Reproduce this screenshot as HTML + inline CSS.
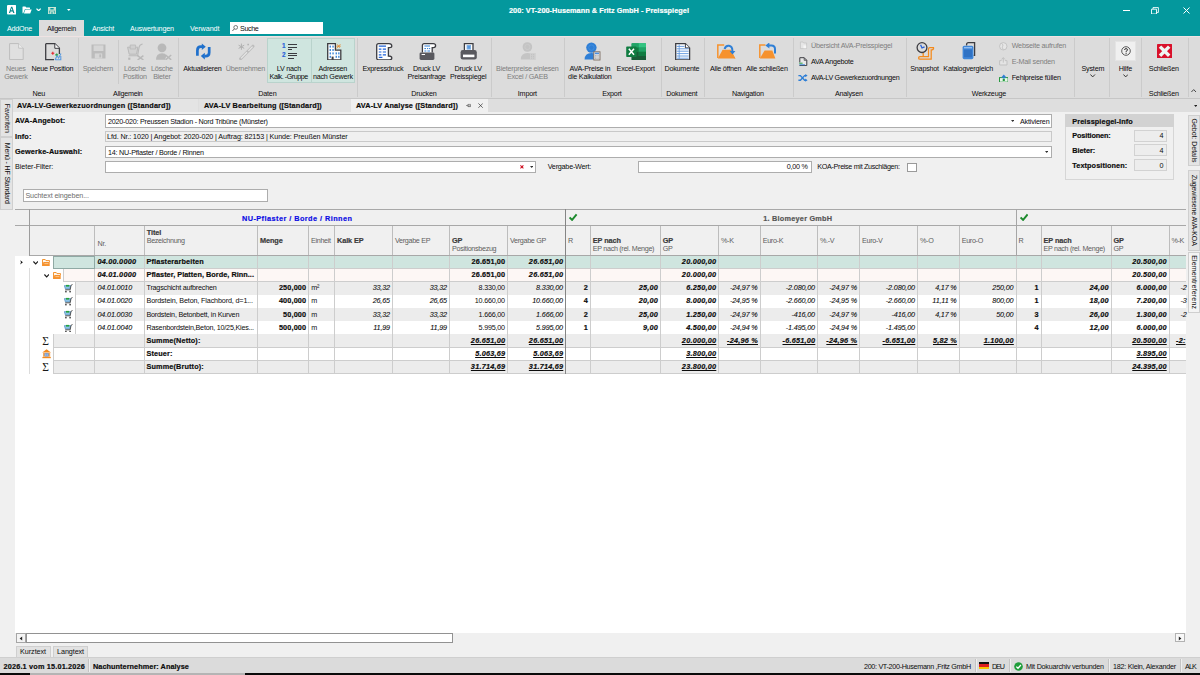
<!DOCTYPE html>
<html><head><meta charset="utf-8"><title>Preisspiegel</title>
<style>
html,body{margin:0;padding:0}
body{width:1200px;height:675px;overflow:hidden;position:relative;background:#f0f0f0;font-family:"Liberation Sans",sans-serif;font-size:7px;color:#0c0c0c}
.t{position:absolute;white-space:nowrap;line-height:10px;height:10px}
.r{position:absolute;box-sizing:border-box;overflow:hidden}
</style></head><body>
<div class="r" style="left:0.00px;top:0.00px;width:1200.00px;height:36.00px;background:#04989d;"></div>
<div class="t" style="top:5.80px;font-size:7.30px;letter-spacing:0.040px;left:509.02px;font-weight:bold;-webkit-text-stroke:0.18px;color:#fff;">200: VT-200-Husemann &amp; Fritz GmbH - Preisspiegel</div>
<div class="r" style="left:39.20px;top:20.00px;width:44.80px;height:17.00px;background:#dcdcdc;"></div>
<div class="t" style="top:23.80px;font-size:7.20px;letter-spacing:-0.237px;left:7.00px;color:#fff;">AddOne</div>
<div class="t" style="top:23.80px;font-size:7.20px;letter-spacing:-0.291px;left:47.05px;color:#0c0c0c;">Allgemein</div>
<div class="t" style="top:23.80px;font-size:7.20px;letter-spacing:-0.230px;left:92.00px;color:#fff;">Ansicht</div>
<div class="t" style="top:23.80px;font-size:7.20px;letter-spacing:-0.169px;left:130.00px;color:#fff;">Auswertungen</div>
<div class="t" style="top:23.80px;font-size:7.20px;letter-spacing:-0.065px;left:190.00px;color:#fff;">Verwandt</div>
<div class="r" style="left:229.70px;top:22.00px;width:93.30px;height:12.20px;background:#fff;"></div>
<div class="t" style="top:23.80px;font-size:7.20px;letter-spacing:-0.383px;left:240.00px;color:#0c0c0c;">Suche</div>
<div class="r" style="left:0.00px;top:36.00px;width:1200.00px;height:62.30px;background:#dcdcdc;"></div>
<div class="r" style="left:0.00px;top:36.00px;width:1200.00px;height:1.00px;background:#efe3e3;"></div>
<div class="r" style="left:0.00px;top:98.00px;width:1200.00px;height:1.00px;background:#c6c6c6;"></div>
<div class="r" style="left:78.00px;top:38.00px;width:1.00px;height:59.00px;background:#cbcbcb;"></div>
<div class="r" style="left:178.00px;top:38.00px;width:1.00px;height:59.00px;background:#cbcbcb;"></div>
<div class="r" style="left:357.00px;top:38.00px;width:1.00px;height:59.00px;background:#cbcbcb;"></div>
<div class="r" style="left:491.30px;top:38.00px;width:1.00px;height:59.00px;background:#cbcbcb;"></div>
<div class="r" style="left:564.00px;top:38.00px;width:1.00px;height:59.00px;background:#cbcbcb;"></div>
<div class="r" style="left:660.60px;top:38.00px;width:1.00px;height:59.00px;background:#cbcbcb;"></div>
<div class="r" style="left:704.30px;top:38.00px;width:1.00px;height:59.00px;background:#cbcbcb;"></div>
<div class="r" style="left:792.50px;top:38.00px;width:1.00px;height:59.00px;background:#cbcbcb;"></div>
<div class="r" style="left:906.00px;top:38.00px;width:1.00px;height:59.00px;background:#cbcbcb;"></div>
<div class="r" style="left:1073.50px;top:38.00px;width:1.00px;height:59.00px;background:#cbcbcb;"></div>
<div class="r" style="left:1109.00px;top:38.00px;width:1.00px;height:59.00px;background:#cbcbcb;"></div>
<div class="r" style="left:1141.00px;top:38.00px;width:1.00px;height:59.00px;background:#cbcbcb;"></div>
<div class="r" style="left:1188.00px;top:38.00px;width:1.00px;height:59.00px;background:#cbcbcb;"></div>
<div class="r" style="left:118.30px;top:40.00px;width:1.00px;height:44.00px;background:#cbcbcb;"></div>
<div class="r" style="left:267.00px;top:38.40px;width:44.50px;height:44.20px;background:#cfe5df;box-shadow:inset 0 0 0 1px #b9d3cc;"></div>
<div class="r" style="left:311.00px;top:38.40px;width:43.70px;height:44.20px;background:#cfe5df;box-shadow:inset 0 0 0 1px #b9d3cc;"></div>
<div class="t" style="top:63.90px;font-size:7.20px;letter-spacing:-0.220px;left:6.03px;color:#7e7e7e;">Neues</div>
<div class="t" style="top:72.00px;font-size:7.20px;letter-spacing:-0.220px;left:4.15px;color:#7e7e7e;">Gewerk</div>
<div class="t" style="top:63.90px;font-size:7.20px;letter-spacing:-0.220px;left:31.41px;color:#0c0c0c;">Neue Position</div>
<div class="t" style="top:63.90px;font-size:7.20px;letter-spacing:-0.220px;left:82.67px;color:#7e7e7e;">Speichern</div>
<div class="t" style="top:63.90px;font-size:7.20px;letter-spacing:-0.220px;left:123.94px;color:#7e7e7e;">Lösche</div>
<div class="t" style="top:72.00px;font-size:7.20px;letter-spacing:-0.220px;left:122.96px;color:#7e7e7e;">Position</div>
<div class="t" style="top:63.90px;font-size:7.20px;letter-spacing:-0.220px;left:150.94px;color:#7e7e7e;">Lösche</div>
<div class="t" style="top:72.00px;font-size:7.20px;letter-spacing:-0.220px;left:153.15px;color:#7e7e7e;">Bieter</div>
<div class="t" style="top:63.90px;font-size:7.20px;letter-spacing:-0.220px;left:183.21px;color:#0c0c0c;">Aktualisieren</div>
<div class="t" style="top:63.90px;font-size:7.20px;letter-spacing:-0.220px;left:225.68px;color:#7e7e7e;">Übernehmen</div>
<div class="t" style="top:63.90px;font-size:7.20px;letter-spacing:-0.220px;left:276.72px;color:#0c0c0c;">LV nach</div>
<div class="t" style="top:72.00px;font-size:7.20px;letter-spacing:-0.471px;left:269.61px;color:#0c0c0c;">Kalk. -Gruppe</div>
<div class="t" style="top:63.90px;font-size:7.20px;letter-spacing:-0.220px;left:318.56px;color:#0c0c0c;">Adressen</div>
<div class="t" style="top:72.00px;font-size:7.20px;letter-spacing:-0.220px;left:312.89px;color:#0c0c0c;">nach Gewerk</div>
<div class="t" style="top:63.90px;font-size:7.20px;letter-spacing:-0.220px;left:362.40px;color:#0c0c0c;">Expressdruck</div>
<div class="t" style="top:63.90px;font-size:7.20px;letter-spacing:-0.220px;left:412.93px;color:#0c0c0c;">Druck LV</div>
<div class="t" style="top:72.00px;font-size:7.20px;letter-spacing:-0.220px;left:407.50px;color:#0c0c0c;">Preisanfrage</div>
<div class="t" style="top:63.90px;font-size:7.20px;letter-spacing:-0.220px;left:454.53px;color:#0c0c0c;">Druck LV</div>
<div class="t" style="top:72.00px;font-size:7.20px;letter-spacing:-0.220px;left:449.90px;color:#0c0c0c;">Preisspiegel</div>
<div class="t" style="top:63.90px;font-size:7.20px;letter-spacing:-0.220px;left:496.08px;color:#7e7e7e;">Bieterpreise einlesen</div>
<div class="t" style="top:72.00px;font-size:7.20px;letter-spacing:-0.220px;left:506.90px;color:#7e7e7e;">Excel / GAEB</div>
<div class="t" style="top:63.90px;font-size:7.20px;letter-spacing:-0.220px;left:569.44px;color:#0c0c0c;">AVA-Preise in</div>
<div class="t" style="top:72.00px;font-size:7.20px;letter-spacing:-0.220px;left:568.12px;color:#0c0c0c;">die Kalkulation</div>
<div class="t" style="top:63.90px;font-size:7.20px;letter-spacing:-0.220px;left:616.60px;color:#0c0c0c;">Excel-Export</div>
<div class="t" style="top:63.90px;font-size:7.20px;letter-spacing:-0.220px;left:664.47px;color:#0c0c0c;">Dokumente</div>
<div class="t" style="top:63.90px;font-size:7.20px;letter-spacing:-0.220px;left:709.95px;color:#0c0c0c;">Alle öffnen</div>
<div class="t" style="top:63.90px;font-size:7.20px;letter-spacing:-0.220px;left:746.02px;color:#0c0c0c;">Alle schließen</div>
<div class="t" style="top:63.90px;font-size:7.20px;letter-spacing:-0.220px;left:910.26px;color:#0c0c0c;">Snapshot</div>
<div class="t" style="top:63.90px;font-size:7.20px;letter-spacing:-0.220px;left:943.33px;color:#0c0c0c;">Katalogvergleich</div>
<div class="t" style="top:63.90px;font-size:7.20px;letter-spacing:-0.220px;left:1081.55px;color:#0c0c0c;">System</div>
<div class="t" style="top:63.90px;font-size:7.20px;letter-spacing:-0.220px;left:1118.74px;color:#0c0c0c;">Hilfe</div>
<div class="t" style="top:63.90px;font-size:7.20px;letter-spacing:-0.220px;left:1148.87px;color:#0c0c0c;">Schließen</div>
<div class="t" style="top:40.80px;font-size:7.20px;letter-spacing:-0.220px;left:811.00px;color:#7e7e7e;">Übersicht AVA-Preisspiegel</div>
<div class="t" style="top:56.80px;font-size:7.20px;letter-spacing:-0.220px;left:811.00px;">AVA Angebote</div>
<div class="t" style="top:73.30px;font-size:7.20px;letter-spacing:-0.334px;left:811.00px;">AVA-LV Gewerkezuordnungen</div>
<div class="t" style="top:40.80px;font-size:7.20px;letter-spacing:-0.220px;left:1011.70px;color:#7e7e7e;">Webseite aufrufen</div>
<div class="t" style="top:56.80px;font-size:7.20px;letter-spacing:-0.220px;left:1011.70px;color:#7e7e7e;">E-Mail senden</div>
<div class="t" style="top:73.30px;font-size:7.20px;letter-spacing:-0.220px;left:1011.70px;">Fehlpreise füllen</div>
<div class="t" style="top:89.00px;font-size:7.20px;letter-spacing:-0.220px;left:32.62px;">Neu</div>
<div class="t" style="top:89.00px;font-size:7.20px;letter-spacing:-0.220px;left:113.07px;">Allgemein</div>
<div class="t" style="top:89.00px;font-size:7.20px;letter-spacing:-0.220px;left:258.33px;">Daten</div>
<div class="t" style="top:89.00px;font-size:7.20px;letter-spacing:-0.220px;left:411.25px;">Drucken</div>
<div class="t" style="top:89.00px;font-size:7.20px;letter-spacing:-0.220px;left:517.85px;">Import</div>
<div class="t" style="top:89.00px;font-size:7.20px;letter-spacing:-0.220px;left:602.15px;">Export</div>
<div class="t" style="top:89.00px;font-size:7.20px;letter-spacing:-0.220px;left:666.36px;">Dokument</div>
<div class="t" style="top:89.00px;font-size:7.20px;letter-spacing:-0.220px;left:731.98px;">Navigation</div>
<div class="t" style="top:89.00px;font-size:7.20px;letter-spacing:-0.220px;left:834.96px;">Analysen</div>
<div class="t" style="top:89.00px;font-size:7.20px;letter-spacing:-0.220px;left:971.74px;">Werkzeuge</div>
<div class="t" style="top:89.00px;font-size:7.20px;letter-spacing:-0.220px;left:1148.87px;">Schließen</div>
<div class="r" style="left:0.00px;top:99.00px;width:1200.00px;height:13.20px;background:#dedede;"></div>
<div class="r" style="left:13.00px;top:99.00px;width:185.00px;height:13.20px;background:#e4e4e4;"></div>
<div class="r" style="left:198.50px;top:99.00px;width:152.50px;height:13.20px;background:#e2e2e2;"></div>
<div class="r" style="left:351.00px;top:99.00px;width:136.50px;height:14.00px;background:#f0f0f0;"></div>
<div class="t" style="top:100.90px;font-size:7.30px;letter-spacing:0.168px;left:17.00px;font-weight:bold;-webkit-text-stroke:0.18px;">AVA-LV-Gewerkezuordnungen ([Standard])</div>
<div class="t" style="top:100.90px;font-size:7.30px;letter-spacing:0.143px;left:204.00px;font-weight:bold;-webkit-text-stroke:0.18px;">AVA-LV Bearbeitung ([Standard])</div>
<div class="t" style="top:100.90px;font-size:7.30px;letter-spacing:0.122px;left:356.00px;font-weight:bold;-webkit-text-stroke:0.18px;">AVA-LV Analyse ([Standard])</div>
<div class="r" style="left:0.00px;top:99.00px;width:12.50px;height:576.00px;background:#f0f0f0;"></div>
<div class="r" style="left:1186.00px;top:112.50px;width:14.00px;height:545.00px;background:#f0f0f0;"></div>
<div class="t" style="top:116.30px;font-size:7.30px;letter-spacing:0.130px;left:15.00px;font-weight:bold;-webkit-text-stroke:0.18px;">AVA-Angebot:</div>
<div class="r" style="left:105.00px;top:114.30px;width:946.50px;height:13.40px;background:#fff;box-shadow:inset 0 0 0 1px #adadad;"></div>
<div class="t" style="top:116.70px;font-size:7.20px;letter-spacing:-0.237px;left:108.00px;">2020-020: Preussen Stadion - Nord Tribüne (Münster)</div>
<div class="t" style="top:116.70px;font-size:7.20px;letter-spacing:-0.211px;left:1020.00px;">Aktivieren</div>
<div class="t" style="top:132.20px;font-size:7.30px;letter-spacing:0.130px;left:15.00px;font-weight:bold;-webkit-text-stroke:0.18px;">Info:</div>
<div class="r" style="left:105.00px;top:131.00px;width:946.50px;height:11.40px;background:#f0f0f0;box-shadow:inset 0 0 0 1px #c9c9c9;"></div>
<div class="t" style="top:132.00px;font-size:7.20px;letter-spacing:-0.105px;left:107.00px;">Lfd. Nr.: 1020 | Angebot: 2020-020 | Auftrag: 82153 | Kunde: Preußen Münster</div>
<div class="t" style="top:147.20px;font-size:7.30px;letter-spacing:0.130px;left:15.00px;font-weight:bold;-webkit-text-stroke:0.18px;">Gewerke-Auswahl:</div>
<div class="r" style="left:105.00px;top:145.60px;width:946.50px;height:12.30px;background:#fff;box-shadow:inset 0 0 0 1px #adadad;"></div>
<div class="t" style="top:147.50px;font-size:7.20px;letter-spacing:-0.227px;left:108.00px;">14: NU-Pflaster / Borde / Rinnen</div>
<div class="t" style="top:162.20px;font-size:7.20px;letter-spacing:-0.065px;left:15.00px;">Bieter-Filter:</div>
<div class="r" style="left:105.00px;top:160.60px;width:431.00px;height:12.30px;background:#fff;box-shadow:inset 0 0 0 1px #adadad;"></div>
<div class="t" style="top:162.20px;font-size:7.20px;letter-spacing:-0.220px;left:547.70px;">Vergabe-Wert:</div>
<div class="r" style="left:638.30px;top:160.60px;width:173.40px;height:12.30px;background:#fff;box-shadow:inset 0 0 0 1px #adadad;"></div>
<div class="t" style="top:162.40px;font-size:7.20px;letter-spacing:-0.220px;left:786.68px;">0,00 %</div>
<div class="t" style="top:162.20px;font-size:7.20px;letter-spacing:-0.321px;left:817.30px;">KOA-Preise mit Zuschlägen:</div>
<div class="r" style="left:907.30px;top:162.50px;width:9.50px;height:9.50px;background:#fff;box-shadow:inset 0 0 0 1px #9a9a9a;"></div>
<div class="r" style="left:23.30px;top:189.30px;width:244.50px;height:12.50px;background:#fff;box-shadow:inset 0 0 0 1px #adadad;"></div>
<div class="t" style="top:191.00px;font-size:7.20px;letter-spacing:-0.102px;left:25.40px;color:#6c6c6c;">Suchtext eingeben...</div>
<div class="r" style="left:1065.00px;top:114.30px;width:109.00px;height:65.50px;background:#f0f0f0;box-shadow:inset 0 0 0 1px #d6d6d6;"></div>
<div class="r" style="left:1065.00px;top:114.30px;width:109.00px;height:13.20px;background:#d2d2d2;"></div>
<div class="t" style="top:116.80px;font-size:7.30px;letter-spacing:0.099px;left:1072.30px;font-weight:bold;-webkit-text-stroke:0.18px;">Preisspiegel-Info</div>
<div class="t" style="top:130.80px;font-size:7.30px;letter-spacing:-0.131px;left:1072.30px;font-weight:bold;-webkit-text-stroke:0.18px;">Positionen:</div>
<div class="r" style="left:1134.30px;top:129.60px;width:32.50px;height:12.00px;background:#ededed;box-shadow:inset 0 0 0 1px #d2d2d2;"></div>
<div class="t" style="top:131.00px;font-size:7.20px;letter-spacing:-0.220px;left:1159.50px;">4</div>
<div class="t" style="top:145.60px;font-size:7.30px;letter-spacing:-0.018px;left:1072.30px;font-weight:bold;-webkit-text-stroke:0.18px;">Bieter:</div>
<div class="r" style="left:1134.30px;top:144.30px;width:32.50px;height:12.00px;background:#ededed;box-shadow:inset 0 0 0 1px #d2d2d2;"></div>
<div class="t" style="top:145.80px;font-size:7.20px;letter-spacing:-0.220px;left:1159.50px;">4</div>
<div class="t" style="top:160.60px;font-size:7.30px;letter-spacing:0.080px;left:1072.30px;font-weight:bold;-webkit-text-stroke:0.18px;">Textpositionen:</div>
<div class="r" style="left:1134.30px;top:159.30px;width:32.50px;height:12.00px;background:#ededed;box-shadow:inset 0 0 0 1px #d2d2d2;"></div>
<div class="t" style="top:160.80px;font-size:7.20px;letter-spacing:-0.220px;left:1159.50px;">0</div>
<div class="r" style="left:15.00px;top:209.00px;width:1171.00px;height:423.50px;background:#fff;"></div>
<div class="r" style="left:15.00px;top:209.00px;width:1171.00px;height:16.00px;background:#f0f0f0;"></div>
<div class="r" style="left:15.00px;top:209.00px;width:1171.00px;height:1.00px;background:#a8a8a8;"></div>
<div class="r" style="left:15.00px;top:225.00px;width:1171.00px;height:1.00px;background:#a8a8a8;"></div>
<div class="r" style="left:15.00px;top:226.00px;width:1171.00px;height:29.50px;background:#f0f0f0;"></div>
<div class="r" style="left:29.00px;top:255.00px;width:1157.00px;height:1.00px;background:#a8a8a8;"></div>
<div class="r" style="left:29.00px;top:226.00px;width:1.00px;height:29.00px;background:#bdbdbd;"></div>
<div class="r" style="left:94.30px;top:226.00px;width:1.00px;height:29.00px;background:#bdbdbd;"></div>
<div class="r" style="left:144.00px;top:226.00px;width:1.00px;height:29.00px;background:#bdbdbd;"></div>
<div class="r" style="left:257.30px;top:226.00px;width:1.00px;height:29.00px;background:#bdbdbd;"></div>
<div class="r" style="left:308.30px;top:226.00px;width:1.00px;height:29.00px;background:#bdbdbd;"></div>
<div class="r" style="left:334.30px;top:226.00px;width:1.00px;height:29.00px;background:#bdbdbd;"></div>
<div class="r" style="left:392.30px;top:226.00px;width:1.00px;height:29.00px;background:#bdbdbd;"></div>
<div class="r" style="left:449.30px;top:226.00px;width:1.00px;height:29.00px;background:#bdbdbd;"></div>
<div class="r" style="left:507.30px;top:226.00px;width:1.00px;height:29.00px;background:#bdbdbd;"></div>
<div class="r" style="left:565.30px;top:226.00px;width:1.00px;height:29.00px;background:#bdbdbd;"></div>
<div class="r" style="left:590.10px;top:226.00px;width:1.00px;height:29.00px;background:#bdbdbd;"></div>
<div class="r" style="left:660.00px;top:226.00px;width:1.00px;height:29.00px;background:#bdbdbd;"></div>
<div class="r" style="left:718.30px;top:226.00px;width:1.00px;height:29.00px;background:#bdbdbd;"></div>
<div class="r" style="left:760.00px;top:226.00px;width:1.00px;height:29.00px;background:#bdbdbd;"></div>
<div class="r" style="left:817.30px;top:226.00px;width:1.00px;height:29.00px;background:#bdbdbd;"></div>
<div class="r" style="left:859.30px;top:226.00px;width:1.00px;height:29.00px;background:#bdbdbd;"></div>
<div class="r" style="left:917.30px;top:226.00px;width:1.00px;height:29.00px;background:#bdbdbd;"></div>
<div class="r" style="left:959.00px;top:226.00px;width:1.00px;height:29.00px;background:#bdbdbd;"></div>
<div class="r" style="left:1015.80px;top:226.00px;width:1.00px;height:29.00px;background:#bdbdbd;"></div>
<div class="r" style="left:1040.80px;top:226.00px;width:1.00px;height:29.00px;background:#bdbdbd;"></div>
<div class="r" style="left:1110.80px;top:226.00px;width:1.00px;height:29.00px;background:#bdbdbd;"></div>
<div class="r" style="left:1168.70px;top:226.00px;width:1.00px;height:29.00px;background:#bdbdbd;"></div>
<div class="r" style="left:29.00px;top:209.00px;width:1.00px;height:46.50px;background:#9c9c9c;"></div>
<div class="r" style="left:565.30px;top:209.00px;width:1.00px;height:46.50px;background:#858585;"></div>
<div class="r" style="left:1015.80px;top:209.00px;width:1.00px;height:46.50px;background:#a6a6a6;"></div>
<div class="t" style="top:213.60px;font-size:7.30px;letter-spacing:0.455px;left:241.98px;font-weight:bold;-webkit-text-stroke:0.18px;color:#0c0ce4;">NU-Pflaster / Borde / Rinnen</div>
<div class="t" style="top:213.60px;font-size:7.30px;letter-spacing:0.230px;left:763.30px;font-weight:bold;-webkit-text-stroke:0.18px;color:#555;">1. Blomeyer GmbH</div>
<svg class="r" style="left:569.00px;top:212.80px" width="8.5" height="8.5" viewBox="0 0 8.5 8.5"><path d="M0.6 4.4 L3.1 6.9 L7.6 1.4" fill="none" stroke="#1c8a2c" stroke-width="1.9"/></svg>
<svg class="r" style="left:1019.80px;top:212.80px" width="8.5" height="8.5" viewBox="0 0 8.5 8.5"><path d="M0.6 4.4 L3.1 6.9 L7.6 1.4" fill="none" stroke="#1c8a2c" stroke-width="1.9"/></svg>
<div class="t" style="top:239.30px;font-size:7.20px;letter-spacing:-0.220px;left:97.50px;color:#5e5e5e;">Nr.</div>
<div class="t" style="top:227.90px;font-size:7.30px;letter-spacing:-0.080px;left:146.70px;font-weight:bold;-webkit-text-stroke:0.18px;color:#3a3a3a;">Titel</div>
<div class="t" style="top:236.00px;font-size:7.20px;letter-spacing:-0.320px;left:146.70px;color:#5e5e5e;">Bezeichnung</div>
<div class="t" style="top:235.70px;font-size:7.30px;letter-spacing:-0.080px;left:260.00px;font-weight:bold;-webkit-text-stroke:0.18px;color:#3a3a3a;">Menge</div>
<div class="t" style="top:235.70px;font-size:7.20px;letter-spacing:-0.320px;left:311.00px;color:#5e5e5e;">Einheit</div>
<div class="t" style="top:235.70px;font-size:7.30px;letter-spacing:-0.080px;left:337.00px;font-weight:bold;-webkit-text-stroke:0.18px;color:#3a3a3a;">Kalk EP</div>
<div class="t" style="top:235.70px;font-size:7.20px;letter-spacing:-0.320px;left:395.00px;color:#5e5e5e;">Vergabe EP</div>
<div class="t" style="top:235.70px;font-size:7.30px;letter-spacing:-0.080px;left:452.00px;font-weight:bold;-webkit-text-stroke:0.18px;color:#3a3a3a;">GP</div>
<div class="t" style="top:244.00px;font-size:7.20px;letter-spacing:-0.320px;left:452.00px;color:#5e5e5e;">Positionsbezug</div>
<div class="t" style="top:235.70px;font-size:7.20px;letter-spacing:-0.320px;left:510.00px;color:#5e5e5e;">Vergabe GP</div>
<div class="t" style="top:235.70px;font-size:7.20px;letter-spacing:-0.320px;left:568.00px;color:#5e5e5e;">R</div>
<div class="t" style="top:235.70px;font-size:7.30px;letter-spacing:-0.080px;left:592.80px;font-weight:bold;-webkit-text-stroke:0.18px;color:#3a3a3a;">EP nach</div>
<div class="t" style="top:244.00px;font-size:7.20px;letter-spacing:-0.320px;left:592.80px;color:#5e5e5e;">EP nach (rel. Menge)</div>
<div class="t" style="top:235.70px;font-size:7.30px;letter-spacing:-0.080px;left:662.70px;font-weight:bold;-webkit-text-stroke:0.18px;color:#3a3a3a;">GP</div>
<div class="t" style="top:244.00px;font-size:7.20px;letter-spacing:-0.320px;left:662.70px;color:#5e5e5e;">GP</div>
<div class="t" style="top:235.70px;font-size:7.20px;letter-spacing:-0.320px;left:721.00px;color:#5e5e5e;">%-K</div>
<div class="t" style="top:235.70px;font-size:7.20px;letter-spacing:-0.320px;left:762.70px;color:#5e5e5e;">Euro-K</div>
<div class="t" style="top:235.70px;font-size:7.20px;letter-spacing:-0.320px;left:820.00px;color:#5e5e5e;">%.-V</div>
<div class="t" style="top:235.70px;font-size:7.20px;letter-spacing:-0.320px;left:862.00px;color:#5e5e5e;">Euro-V</div>
<div class="t" style="top:235.70px;font-size:7.20px;letter-spacing:-0.320px;left:920.00px;color:#5e5e5e;">%-O</div>
<div class="t" style="top:235.70px;font-size:7.20px;letter-spacing:-0.320px;left:961.70px;color:#5e5e5e;">Euro-O</div>
<div class="t" style="top:235.70px;font-size:7.20px;letter-spacing:-0.320px;left:1018.50px;color:#5e5e5e;">R</div>
<div class="t" style="top:235.70px;font-size:7.30px;letter-spacing:-0.080px;left:1043.50px;font-weight:bold;-webkit-text-stroke:0.18px;color:#3a3a3a;">EP nach</div>
<div class="t" style="top:244.00px;font-size:7.20px;letter-spacing:-0.320px;left:1043.50px;color:#5e5e5e;">EP nach (rel. Menge)</div>
<div class="t" style="top:235.70px;font-size:7.30px;letter-spacing:-0.080px;left:1113.50px;font-weight:bold;-webkit-text-stroke:0.18px;color:#3a3a3a;">GP</div>
<div class="t" style="top:244.00px;font-size:7.20px;letter-spacing:-0.320px;left:1113.50px;color:#5e5e5e;">GP</div>
<div class="t" style="top:235.70px;font-size:7.20px;letter-spacing:-0.320px;left:1171.40px;color:#5e5e5e;">%-K</div>
<div class="r" style="left:53.00px;top:255.90px;width:1133.00px;height:13.09px;background:#cfe5df;"></div>
<div class="r" style="left:53.00px;top:268.39px;width:1133.00px;height:1.00px;background:#cdcdcd;"></div>
<div class="r" style="left:53.00px;top:255.90px;width:1.00px;height:13.09px;background:#cdcdcd;"></div>
<div class="r" style="left:94.30px;top:255.90px;width:1.00px;height:13.09px;background:#cdcdcd;"></div>
<div class="r" style="left:144.00px;top:255.90px;width:1.00px;height:13.09px;background:#cdcdcd;"></div>
<div class="r" style="left:257.30px;top:255.90px;width:1.00px;height:13.09px;background:#cdcdcd;"></div>
<div class="r" style="left:308.30px;top:255.90px;width:1.00px;height:13.09px;background:#cdcdcd;"></div>
<div class="r" style="left:334.30px;top:255.90px;width:1.00px;height:13.09px;background:#cdcdcd;"></div>
<div class="r" style="left:392.30px;top:255.90px;width:1.00px;height:13.09px;background:#cdcdcd;"></div>
<div class="r" style="left:449.30px;top:255.90px;width:1.00px;height:13.09px;background:#cdcdcd;"></div>
<div class="r" style="left:507.30px;top:255.90px;width:1.00px;height:13.09px;background:#cdcdcd;"></div>
<div class="r" style="left:565.30px;top:255.90px;width:1.00px;height:13.09px;background:#cdcdcd;"></div>
<div class="r" style="left:590.10px;top:255.90px;width:1.00px;height:13.09px;background:#cdcdcd;"></div>
<div class="r" style="left:660.00px;top:255.90px;width:1.00px;height:13.09px;background:#cdcdcd;"></div>
<div class="r" style="left:718.30px;top:255.90px;width:1.00px;height:13.09px;background:#cdcdcd;"></div>
<div class="r" style="left:760.00px;top:255.90px;width:1.00px;height:13.09px;background:#cdcdcd;"></div>
<div class="r" style="left:817.30px;top:255.90px;width:1.00px;height:13.09px;background:#cdcdcd;"></div>
<div class="r" style="left:859.30px;top:255.90px;width:1.00px;height:13.09px;background:#cdcdcd;"></div>
<div class="r" style="left:917.30px;top:255.90px;width:1.00px;height:13.09px;background:#cdcdcd;"></div>
<div class="r" style="left:959.00px;top:255.90px;width:1.00px;height:13.09px;background:#cdcdcd;"></div>
<div class="r" style="left:1015.80px;top:255.90px;width:1.00px;height:13.09px;background:#cdcdcd;"></div>
<div class="r" style="left:1040.80px;top:255.90px;width:1.00px;height:13.09px;background:#cdcdcd;"></div>
<div class="r" style="left:1110.80px;top:255.90px;width:1.00px;height:13.09px;background:#cdcdcd;"></div>
<div class="r" style="left:1168.70px;top:255.90px;width:1.00px;height:13.09px;background:#cdcdcd;"></div>
<div class="t" style="top:257.14px;font-size:7.30px;letter-spacing:0.220px;left:97.50px;font-weight:bold;-webkit-text-stroke:0.18px;font-style:italic;">04.00.0000</div>
<div class="t" style="top:257.14px;font-size:7.30px;letter-spacing:0.130px;left:146.50px;font-weight:bold;-webkit-text-stroke:0.18px;">Pflasterarbeiten</div>
<div class="t" style="top:257.14px;font-size:7.30px;letter-spacing:0.130px;left:471.58px;font-weight:bold;-webkit-text-stroke:0.18px;">26.651,00</div>
<div class="t" style="top:257.14px;font-size:7.30px;letter-spacing:0.220px;left:528.86px;font-weight:bold;-webkit-text-stroke:0.18px;font-style:italic;">26.651,00</div>
<div class="t" style="top:257.14px;font-size:7.30px;letter-spacing:0.220px;left:681.86px;font-weight:bold;-webkit-text-stroke:0.18px;font-style:italic;">20.000,00</div>
<div class="t" style="top:257.14px;font-size:7.30px;letter-spacing:0.220px;left:1132.26px;font-weight:bold;-webkit-text-stroke:0.18px;font-style:italic;">20.500,00</div>
<div class="r" style="left:63.40px;top:268.99px;width:1122.60px;height:13.09px;background:#fdf7f5;"></div>
<div class="r" style="left:63.40px;top:281.48px;width:1122.60px;height:1.00px;background:#cdcdcd;"></div>
<div class="r" style="left:63.40px;top:268.99px;width:1.00px;height:13.09px;background:#cdcdcd;"></div>
<div class="r" style="left:94.30px;top:268.99px;width:1.00px;height:13.09px;background:#cdcdcd;"></div>
<div class="r" style="left:144.00px;top:268.99px;width:1.00px;height:13.09px;background:#cdcdcd;"></div>
<div class="r" style="left:257.30px;top:268.99px;width:1.00px;height:13.09px;background:#cdcdcd;"></div>
<div class="r" style="left:308.30px;top:268.99px;width:1.00px;height:13.09px;background:#cdcdcd;"></div>
<div class="r" style="left:334.30px;top:268.99px;width:1.00px;height:13.09px;background:#cdcdcd;"></div>
<div class="r" style="left:392.30px;top:268.99px;width:1.00px;height:13.09px;background:#cdcdcd;"></div>
<div class="r" style="left:449.30px;top:268.99px;width:1.00px;height:13.09px;background:#cdcdcd;"></div>
<div class="r" style="left:507.30px;top:268.99px;width:1.00px;height:13.09px;background:#cdcdcd;"></div>
<div class="r" style="left:565.30px;top:268.99px;width:1.00px;height:13.09px;background:#cdcdcd;"></div>
<div class="r" style="left:590.10px;top:268.99px;width:1.00px;height:13.09px;background:#cdcdcd;"></div>
<div class="r" style="left:660.00px;top:268.99px;width:1.00px;height:13.09px;background:#cdcdcd;"></div>
<div class="r" style="left:718.30px;top:268.99px;width:1.00px;height:13.09px;background:#cdcdcd;"></div>
<div class="r" style="left:760.00px;top:268.99px;width:1.00px;height:13.09px;background:#cdcdcd;"></div>
<div class="r" style="left:817.30px;top:268.99px;width:1.00px;height:13.09px;background:#cdcdcd;"></div>
<div class="r" style="left:859.30px;top:268.99px;width:1.00px;height:13.09px;background:#cdcdcd;"></div>
<div class="r" style="left:917.30px;top:268.99px;width:1.00px;height:13.09px;background:#cdcdcd;"></div>
<div class="r" style="left:959.00px;top:268.99px;width:1.00px;height:13.09px;background:#cdcdcd;"></div>
<div class="r" style="left:1015.80px;top:268.99px;width:1.00px;height:13.09px;background:#cdcdcd;"></div>
<div class="r" style="left:1040.80px;top:268.99px;width:1.00px;height:13.09px;background:#cdcdcd;"></div>
<div class="r" style="left:1110.80px;top:268.99px;width:1.00px;height:13.09px;background:#cdcdcd;"></div>
<div class="r" style="left:1168.70px;top:268.99px;width:1.00px;height:13.09px;background:#cdcdcd;"></div>
<div class="t" style="top:270.24px;font-size:7.30px;letter-spacing:0.220px;left:97.50px;font-weight:bold;-webkit-text-stroke:0.18px;font-style:italic;">04.01.0000</div>
<div class="t" style="top:270.24px;font-size:7.30px;letter-spacing:0.037px;left:146.50px;font-weight:bold;-webkit-text-stroke:0.18px;">Pflaster, Platten, Borde, Rinn...</div>
<div class="t" style="top:270.24px;font-size:7.30px;letter-spacing:0.130px;left:471.58px;font-weight:bold;-webkit-text-stroke:0.18px;">26.651,00</div>
<div class="t" style="top:270.24px;font-size:7.30px;letter-spacing:0.220px;left:528.86px;font-weight:bold;-webkit-text-stroke:0.18px;font-style:italic;">26.651,00</div>
<div class="t" style="top:270.24px;font-size:7.30px;letter-spacing:0.220px;left:681.86px;font-weight:bold;-webkit-text-stroke:0.18px;font-style:italic;">20.000,00</div>
<div class="t" style="top:270.24px;font-size:7.30px;letter-spacing:0.220px;left:1132.26px;font-weight:bold;-webkit-text-stroke:0.18px;font-style:italic;">20.500,00</div>
<div class="r" style="left:74.50px;top:282.08px;width:1111.50px;height:13.09px;background:#ececec;"></div>
<div class="r" style="left:74.50px;top:294.57px;width:1111.50px;height:1.00px;background:#cdcdcd;"></div>
<div class="r" style="left:74.50px;top:282.08px;width:1.00px;height:13.09px;background:#cdcdcd;"></div>
<div class="r" style="left:94.30px;top:282.08px;width:1.00px;height:13.09px;background:#cdcdcd;"></div>
<div class="r" style="left:144.00px;top:282.08px;width:1.00px;height:13.09px;background:#cdcdcd;"></div>
<div class="r" style="left:257.30px;top:282.08px;width:1.00px;height:13.09px;background:#cdcdcd;"></div>
<div class="r" style="left:308.30px;top:282.08px;width:1.00px;height:13.09px;background:#cdcdcd;"></div>
<div class="r" style="left:334.30px;top:282.08px;width:1.00px;height:13.09px;background:#cdcdcd;"></div>
<div class="r" style="left:392.30px;top:282.08px;width:1.00px;height:13.09px;background:#cdcdcd;"></div>
<div class="r" style="left:449.30px;top:282.08px;width:1.00px;height:13.09px;background:#cdcdcd;"></div>
<div class="r" style="left:507.30px;top:282.08px;width:1.00px;height:13.09px;background:#cdcdcd;"></div>
<div class="r" style="left:565.30px;top:282.08px;width:1.00px;height:13.09px;background:#cdcdcd;"></div>
<div class="r" style="left:590.10px;top:282.08px;width:1.00px;height:13.09px;background:#cdcdcd;"></div>
<div class="r" style="left:660.00px;top:282.08px;width:1.00px;height:13.09px;background:#cdcdcd;"></div>
<div class="r" style="left:718.30px;top:282.08px;width:1.00px;height:13.09px;background:#cdcdcd;"></div>
<div class="r" style="left:760.00px;top:282.08px;width:1.00px;height:13.09px;background:#cdcdcd;"></div>
<div class="r" style="left:817.30px;top:282.08px;width:1.00px;height:13.09px;background:#cdcdcd;"></div>
<div class="r" style="left:859.30px;top:282.08px;width:1.00px;height:13.09px;background:#cdcdcd;"></div>
<div class="r" style="left:917.30px;top:282.08px;width:1.00px;height:13.09px;background:#cdcdcd;"></div>
<div class="r" style="left:959.00px;top:282.08px;width:1.00px;height:13.09px;background:#cdcdcd;"></div>
<div class="r" style="left:1015.80px;top:282.08px;width:1.00px;height:13.09px;background:#cdcdcd;"></div>
<div class="r" style="left:1040.80px;top:282.08px;width:1.00px;height:13.09px;background:#cdcdcd;"></div>
<div class="r" style="left:1110.80px;top:282.08px;width:1.00px;height:13.09px;background:#cdcdcd;"></div>
<div class="r" style="left:1168.70px;top:282.08px;width:1.00px;height:13.09px;background:#cdcdcd;"></div>
<div class="t" style="top:283.32px;font-size:7.20px;letter-spacing:-0.150px;left:97.50px;font-style:italic;-webkit-text-stroke:0.1px;">04.01.0010</div>
<div class="t" style="top:283.32px;font-size:7.20px;letter-spacing:-0.220px;left:146.50px;">Tragschicht aufbrechen</div>
<div class="t" style="top:283.32px;font-size:7.30px;letter-spacing:0.130px;left:278.93px;font-weight:bold;-webkit-text-stroke:0.18px;">250,000</div>
<div class="t" style="top:283.32px;font-size:7.20px;letter-spacing:-0.220px;left:311.30px;">m²</div>
<div class="t" style="top:283.32px;font-size:7.20px;letter-spacing:-0.150px;left:372.68px;font-style:italic;-webkit-text-stroke:0.1px;">33,32</div>
<div class="t" style="top:283.32px;font-size:7.20px;letter-spacing:-0.150px;left:429.68px;font-style:italic;-webkit-text-stroke:0.1px;">33,32</div>
<div class="t" style="top:283.32px;font-size:7.20px;letter-spacing:-0.220px;left:478.61px;">8.330,00</div>
<div class="t" style="top:283.32px;font-size:7.20px;letter-spacing:-0.150px;left:536.12px;font-style:italic;-webkit-text-stroke:0.1px;">8.330,00</div>
<div class="t" style="top:283.32px;font-size:7.30px;letter-spacing:0.130px;left:583.84px;font-weight:bold;-webkit-text-stroke:0.18px;">2</div>
<div class="t" style="top:283.32px;font-size:7.30px;letter-spacing:0.220px;left:638.65px;font-weight:bold;-webkit-text-stroke:0.18px;font-style:italic;">25,00</div>
<div class="t" style="top:283.32px;font-size:7.30px;letter-spacing:0.220px;left:686.14px;font-weight:bold;-webkit-text-stroke:0.18px;font-style:italic;">6.250,00</div>
<div class="t" style="top:283.32px;font-size:7.20px;letter-spacing:-0.150px;left:730.03px;font-style:italic;-webkit-text-stroke:0.1px;">-24,97 %</div>
<div class="t" style="top:283.32px;font-size:7.20px;letter-spacing:-0.150px;left:785.87px;font-style:italic;-webkit-text-stroke:0.1px;">-2.080,00</div>
<div class="t" style="top:283.32px;font-size:7.20px;letter-spacing:-0.150px;left:829.33px;font-style:italic;-webkit-text-stroke:0.1px;">-24,97 %</div>
<div class="t" style="top:283.32px;font-size:7.20px;letter-spacing:-0.150px;left:885.87px;font-style:italic;-webkit-text-stroke:0.1px;">-2.080,00</div>
<div class="t" style="top:283.32px;font-size:7.20px;letter-spacing:-0.150px;left:935.13px;font-style:italic;-webkit-text-stroke:0.1px;">4,17 %</div>
<div class="t" style="top:283.32px;font-size:7.20px;letter-spacing:-0.150px;left:992.33px;font-style:italic;-webkit-text-stroke:0.1px;">250,00</div>
<div class="t" style="top:283.32px;font-size:7.30px;letter-spacing:0.130px;left:1034.54px;font-weight:bold;-webkit-text-stroke:0.18px;">1</div>
<div class="t" style="top:283.32px;font-size:7.30px;letter-spacing:0.220px;left:1089.45px;font-weight:bold;-webkit-text-stroke:0.18px;font-style:italic;">24,00</div>
<div class="t" style="top:283.32px;font-size:7.30px;letter-spacing:0.220px;left:1136.54px;font-weight:bold;-webkit-text-stroke:0.18px;font-style:italic;">6.000,00</div>
<div class="t" style="top:283.32px;font-size:7.20px;letter-spacing:-0.150px;left:1180.50px;font-style:italic;-webkit-text-stroke:0.1px;">-2</div>
<div class="r" style="left:74.50px;top:295.17px;width:1111.50px;height:13.09px;background:#fff;"></div>
<div class="r" style="left:74.50px;top:307.66px;width:1111.50px;height:1.00px;background:#cdcdcd;"></div>
<div class="r" style="left:74.50px;top:295.17px;width:1.00px;height:13.09px;background:#cdcdcd;"></div>
<div class="r" style="left:94.30px;top:295.17px;width:1.00px;height:13.09px;background:#cdcdcd;"></div>
<div class="r" style="left:144.00px;top:295.17px;width:1.00px;height:13.09px;background:#cdcdcd;"></div>
<div class="r" style="left:257.30px;top:295.17px;width:1.00px;height:13.09px;background:#cdcdcd;"></div>
<div class="r" style="left:308.30px;top:295.17px;width:1.00px;height:13.09px;background:#cdcdcd;"></div>
<div class="r" style="left:334.30px;top:295.17px;width:1.00px;height:13.09px;background:#cdcdcd;"></div>
<div class="r" style="left:392.30px;top:295.17px;width:1.00px;height:13.09px;background:#cdcdcd;"></div>
<div class="r" style="left:449.30px;top:295.17px;width:1.00px;height:13.09px;background:#cdcdcd;"></div>
<div class="r" style="left:507.30px;top:295.17px;width:1.00px;height:13.09px;background:#cdcdcd;"></div>
<div class="r" style="left:565.30px;top:295.17px;width:1.00px;height:13.09px;background:#cdcdcd;"></div>
<div class="r" style="left:590.10px;top:295.17px;width:1.00px;height:13.09px;background:#cdcdcd;"></div>
<div class="r" style="left:660.00px;top:295.17px;width:1.00px;height:13.09px;background:#cdcdcd;"></div>
<div class="r" style="left:718.30px;top:295.17px;width:1.00px;height:13.09px;background:#cdcdcd;"></div>
<div class="r" style="left:760.00px;top:295.17px;width:1.00px;height:13.09px;background:#cdcdcd;"></div>
<div class="r" style="left:817.30px;top:295.17px;width:1.00px;height:13.09px;background:#cdcdcd;"></div>
<div class="r" style="left:859.30px;top:295.17px;width:1.00px;height:13.09px;background:#cdcdcd;"></div>
<div class="r" style="left:917.30px;top:295.17px;width:1.00px;height:13.09px;background:#cdcdcd;"></div>
<div class="r" style="left:959.00px;top:295.17px;width:1.00px;height:13.09px;background:#cdcdcd;"></div>
<div class="r" style="left:1015.80px;top:295.17px;width:1.00px;height:13.09px;background:#cdcdcd;"></div>
<div class="r" style="left:1040.80px;top:295.17px;width:1.00px;height:13.09px;background:#cdcdcd;"></div>
<div class="r" style="left:1110.80px;top:295.17px;width:1.00px;height:13.09px;background:#cdcdcd;"></div>
<div class="r" style="left:1168.70px;top:295.17px;width:1.00px;height:13.09px;background:#cdcdcd;"></div>
<div class="t" style="top:296.42px;font-size:7.20px;letter-spacing:-0.150px;left:97.50px;font-style:italic;-webkit-text-stroke:0.1px;">04.01.0020</div>
<div class="t" style="top:296.42px;font-size:7.20px;letter-spacing:-0.142px;left:146.50px;">Bordstein, Beton, Flachbord, d=1...</div>
<div class="t" style="top:296.42px;font-size:7.30px;letter-spacing:0.130px;left:278.93px;font-weight:bold;-webkit-text-stroke:0.18px;">400,000</div>
<div class="t" style="top:296.42px;font-size:7.20px;letter-spacing:-0.220px;left:311.30px;">m</div>
<div class="t" style="top:296.42px;font-size:7.20px;letter-spacing:-0.150px;left:372.68px;font-style:italic;-webkit-text-stroke:0.1px;">26,65</div>
<div class="t" style="top:296.42px;font-size:7.20px;letter-spacing:-0.150px;left:429.68px;font-style:italic;-webkit-text-stroke:0.1px;">26,65</div>
<div class="t" style="top:296.42px;font-size:7.20px;letter-spacing:-0.220px;left:474.83px;">10.660,00</div>
<div class="t" style="top:296.42px;font-size:7.20px;letter-spacing:-0.150px;left:532.27px;font-style:italic;-webkit-text-stroke:0.1px;">10.660,00</div>
<div class="t" style="top:296.42px;font-size:7.30px;letter-spacing:0.130px;left:583.84px;font-weight:bold;-webkit-text-stroke:0.18px;">4</div>
<div class="t" style="top:296.42px;font-size:7.30px;letter-spacing:0.220px;left:638.65px;font-weight:bold;-webkit-text-stroke:0.18px;font-style:italic;">20,00</div>
<div class="t" style="top:296.42px;font-size:7.30px;letter-spacing:0.220px;left:686.14px;font-weight:bold;-webkit-text-stroke:0.18px;font-style:italic;">8.000,00</div>
<div class="t" style="top:296.42px;font-size:7.20px;letter-spacing:-0.150px;left:730.03px;font-style:italic;-webkit-text-stroke:0.1px;">-24,95 %</div>
<div class="t" style="top:296.42px;font-size:7.20px;letter-spacing:-0.150px;left:785.87px;font-style:italic;-webkit-text-stroke:0.1px;">-2.660,00</div>
<div class="t" style="top:296.42px;font-size:7.20px;letter-spacing:-0.150px;left:829.33px;font-style:italic;-webkit-text-stroke:0.1px;">-24,95 %</div>
<div class="t" style="top:296.42px;font-size:7.20px;letter-spacing:-0.150px;left:885.87px;font-style:italic;-webkit-text-stroke:0.1px;">-2.660,00</div>
<div class="t" style="top:296.42px;font-size:7.20px;letter-spacing:-0.150px;left:932.35px;font-style:italic;-webkit-text-stroke:0.1px;">11,11 %</div>
<div class="t" style="top:296.42px;font-size:7.20px;letter-spacing:-0.150px;left:992.33px;font-style:italic;-webkit-text-stroke:0.1px;">800,00</div>
<div class="t" style="top:296.42px;font-size:7.30px;letter-spacing:0.130px;left:1034.54px;font-weight:bold;-webkit-text-stroke:0.18px;">1</div>
<div class="t" style="top:296.42px;font-size:7.30px;letter-spacing:0.220px;left:1089.45px;font-weight:bold;-webkit-text-stroke:0.18px;font-style:italic;">18,00</div>
<div class="t" style="top:296.42px;font-size:7.30px;letter-spacing:0.220px;left:1136.54px;font-weight:bold;-webkit-text-stroke:0.18px;font-style:italic;">7.200,00</div>
<div class="t" style="top:296.42px;font-size:7.20px;letter-spacing:-0.150px;left:1180.50px;font-style:italic;-webkit-text-stroke:0.1px;">-3</div>
<div class="r" style="left:74.50px;top:308.26px;width:1111.50px;height:13.09px;background:#ececec;"></div>
<div class="r" style="left:74.50px;top:320.75px;width:1111.50px;height:1.00px;background:#cdcdcd;"></div>
<div class="r" style="left:74.50px;top:308.26px;width:1.00px;height:13.09px;background:#cdcdcd;"></div>
<div class="r" style="left:94.30px;top:308.26px;width:1.00px;height:13.09px;background:#cdcdcd;"></div>
<div class="r" style="left:144.00px;top:308.26px;width:1.00px;height:13.09px;background:#cdcdcd;"></div>
<div class="r" style="left:257.30px;top:308.26px;width:1.00px;height:13.09px;background:#cdcdcd;"></div>
<div class="r" style="left:308.30px;top:308.26px;width:1.00px;height:13.09px;background:#cdcdcd;"></div>
<div class="r" style="left:334.30px;top:308.26px;width:1.00px;height:13.09px;background:#cdcdcd;"></div>
<div class="r" style="left:392.30px;top:308.26px;width:1.00px;height:13.09px;background:#cdcdcd;"></div>
<div class="r" style="left:449.30px;top:308.26px;width:1.00px;height:13.09px;background:#cdcdcd;"></div>
<div class="r" style="left:507.30px;top:308.26px;width:1.00px;height:13.09px;background:#cdcdcd;"></div>
<div class="r" style="left:565.30px;top:308.26px;width:1.00px;height:13.09px;background:#cdcdcd;"></div>
<div class="r" style="left:590.10px;top:308.26px;width:1.00px;height:13.09px;background:#cdcdcd;"></div>
<div class="r" style="left:660.00px;top:308.26px;width:1.00px;height:13.09px;background:#cdcdcd;"></div>
<div class="r" style="left:718.30px;top:308.26px;width:1.00px;height:13.09px;background:#cdcdcd;"></div>
<div class="r" style="left:760.00px;top:308.26px;width:1.00px;height:13.09px;background:#cdcdcd;"></div>
<div class="r" style="left:817.30px;top:308.26px;width:1.00px;height:13.09px;background:#cdcdcd;"></div>
<div class="r" style="left:859.30px;top:308.26px;width:1.00px;height:13.09px;background:#cdcdcd;"></div>
<div class="r" style="left:917.30px;top:308.26px;width:1.00px;height:13.09px;background:#cdcdcd;"></div>
<div class="r" style="left:959.00px;top:308.26px;width:1.00px;height:13.09px;background:#cdcdcd;"></div>
<div class="r" style="left:1015.80px;top:308.26px;width:1.00px;height:13.09px;background:#cdcdcd;"></div>
<div class="r" style="left:1040.80px;top:308.26px;width:1.00px;height:13.09px;background:#cdcdcd;"></div>
<div class="r" style="left:1110.80px;top:308.26px;width:1.00px;height:13.09px;background:#cdcdcd;"></div>
<div class="r" style="left:1168.70px;top:308.26px;width:1.00px;height:13.09px;background:#cdcdcd;"></div>
<div class="t" style="top:309.50px;font-size:7.20px;letter-spacing:-0.150px;left:97.50px;font-style:italic;-webkit-text-stroke:0.1px;">04.01.0030</div>
<div class="t" style="top:309.50px;font-size:7.20px;letter-spacing:-0.220px;left:146.50px;">Bordstein, Betonbett, in Kurven</div>
<div class="t" style="top:309.50px;font-size:7.30px;letter-spacing:0.130px;left:283.12px;font-weight:bold;-webkit-text-stroke:0.18px;">50,000</div>
<div class="t" style="top:309.50px;font-size:7.20px;letter-spacing:-0.220px;left:311.30px;">m</div>
<div class="t" style="top:309.50px;font-size:7.20px;letter-spacing:-0.150px;left:372.68px;font-style:italic;-webkit-text-stroke:0.1px;">33,32</div>
<div class="t" style="top:309.50px;font-size:7.20px;letter-spacing:-0.150px;left:429.68px;font-style:italic;-webkit-text-stroke:0.1px;">33,32</div>
<div class="t" style="top:309.50px;font-size:7.20px;letter-spacing:-0.220px;left:478.61px;">1.666,00</div>
<div class="t" style="top:309.50px;font-size:7.20px;letter-spacing:-0.150px;left:536.12px;font-style:italic;-webkit-text-stroke:0.1px;">1.666,00</div>
<div class="t" style="top:309.50px;font-size:7.30px;letter-spacing:0.130px;left:583.84px;font-weight:bold;-webkit-text-stroke:0.18px;">2</div>
<div class="t" style="top:309.50px;font-size:7.30px;letter-spacing:0.220px;left:638.65px;font-weight:bold;-webkit-text-stroke:0.18px;font-style:italic;">25,00</div>
<div class="t" style="top:309.50px;font-size:7.30px;letter-spacing:0.220px;left:686.14px;font-weight:bold;-webkit-text-stroke:0.18px;font-style:italic;">1.250,00</div>
<div class="t" style="top:309.50px;font-size:7.20px;letter-spacing:-0.150px;left:730.03px;font-style:italic;-webkit-text-stroke:0.1px;">-24,97 %</div>
<div class="t" style="top:309.50px;font-size:7.20px;letter-spacing:-0.150px;left:791.58px;font-style:italic;-webkit-text-stroke:0.1px;">-416,00</div>
<div class="t" style="top:309.50px;font-size:7.20px;letter-spacing:-0.150px;left:829.33px;font-style:italic;-webkit-text-stroke:0.1px;">-24,97 %</div>
<div class="t" style="top:309.50px;font-size:7.20px;letter-spacing:-0.150px;left:891.58px;font-style:italic;-webkit-text-stroke:0.1px;">-416,00</div>
<div class="t" style="top:309.50px;font-size:7.20px;letter-spacing:-0.150px;left:935.13px;font-style:italic;-webkit-text-stroke:0.1px;">4,17 %</div>
<div class="t" style="top:309.50px;font-size:7.20px;letter-spacing:-0.150px;left:996.18px;font-style:italic;-webkit-text-stroke:0.1px;">50,00</div>
<div class="t" style="top:309.50px;font-size:7.30px;letter-spacing:0.130px;left:1034.54px;font-weight:bold;-webkit-text-stroke:0.18px;">3</div>
<div class="t" style="top:309.50px;font-size:7.30px;letter-spacing:0.220px;left:1089.45px;font-weight:bold;-webkit-text-stroke:0.18px;font-style:italic;">26,00</div>
<div class="t" style="top:309.50px;font-size:7.30px;letter-spacing:0.220px;left:1136.54px;font-weight:bold;-webkit-text-stroke:0.18px;font-style:italic;">1.300,00</div>
<div class="t" style="top:309.50px;font-size:7.20px;letter-spacing:-0.150px;left:1180.50px;font-style:italic;-webkit-text-stroke:0.1px;">-2</div>
<div class="r" style="left:74.50px;top:321.35px;width:1111.50px;height:13.09px;background:#fff;"></div>
<div class="r" style="left:74.50px;top:333.84px;width:1111.50px;height:1.00px;background:#cdcdcd;"></div>
<div class="r" style="left:74.50px;top:321.35px;width:1.00px;height:13.09px;background:#cdcdcd;"></div>
<div class="r" style="left:94.30px;top:321.35px;width:1.00px;height:13.09px;background:#cdcdcd;"></div>
<div class="r" style="left:144.00px;top:321.35px;width:1.00px;height:13.09px;background:#cdcdcd;"></div>
<div class="r" style="left:257.30px;top:321.35px;width:1.00px;height:13.09px;background:#cdcdcd;"></div>
<div class="r" style="left:308.30px;top:321.35px;width:1.00px;height:13.09px;background:#cdcdcd;"></div>
<div class="r" style="left:334.30px;top:321.35px;width:1.00px;height:13.09px;background:#cdcdcd;"></div>
<div class="r" style="left:392.30px;top:321.35px;width:1.00px;height:13.09px;background:#cdcdcd;"></div>
<div class="r" style="left:449.30px;top:321.35px;width:1.00px;height:13.09px;background:#cdcdcd;"></div>
<div class="r" style="left:507.30px;top:321.35px;width:1.00px;height:13.09px;background:#cdcdcd;"></div>
<div class="r" style="left:565.30px;top:321.35px;width:1.00px;height:13.09px;background:#cdcdcd;"></div>
<div class="r" style="left:590.10px;top:321.35px;width:1.00px;height:13.09px;background:#cdcdcd;"></div>
<div class="r" style="left:660.00px;top:321.35px;width:1.00px;height:13.09px;background:#cdcdcd;"></div>
<div class="r" style="left:718.30px;top:321.35px;width:1.00px;height:13.09px;background:#cdcdcd;"></div>
<div class="r" style="left:760.00px;top:321.35px;width:1.00px;height:13.09px;background:#cdcdcd;"></div>
<div class="r" style="left:817.30px;top:321.35px;width:1.00px;height:13.09px;background:#cdcdcd;"></div>
<div class="r" style="left:859.30px;top:321.35px;width:1.00px;height:13.09px;background:#cdcdcd;"></div>
<div class="r" style="left:917.30px;top:321.35px;width:1.00px;height:13.09px;background:#cdcdcd;"></div>
<div class="r" style="left:959.00px;top:321.35px;width:1.00px;height:13.09px;background:#cdcdcd;"></div>
<div class="r" style="left:1015.80px;top:321.35px;width:1.00px;height:13.09px;background:#cdcdcd;"></div>
<div class="r" style="left:1040.80px;top:321.35px;width:1.00px;height:13.09px;background:#cdcdcd;"></div>
<div class="r" style="left:1110.80px;top:321.35px;width:1.00px;height:13.09px;background:#cdcdcd;"></div>
<div class="r" style="left:1168.70px;top:321.35px;width:1.00px;height:13.09px;background:#cdcdcd;"></div>
<div class="t" style="top:322.60px;font-size:7.20px;letter-spacing:-0.150px;left:97.50px;font-style:italic;-webkit-text-stroke:0.1px;">04.01.0040</div>
<div class="t" style="top:322.60px;font-size:7.20px;letter-spacing:-0.220px;left:146.50px;">Rasenbordstein,Beton, 10/25,Kies...</div>
<div class="t" style="top:322.60px;font-size:7.30px;letter-spacing:0.130px;left:278.93px;font-weight:bold;-webkit-text-stroke:0.18px;">500,000</div>
<div class="t" style="top:322.60px;font-size:7.20px;letter-spacing:-0.220px;left:311.30px;">m</div>
<div class="t" style="top:322.60px;font-size:7.20px;letter-spacing:-0.150px;left:373.22px;font-style:italic;-webkit-text-stroke:0.1px;">11,99</div>
<div class="t" style="top:322.60px;font-size:7.20px;letter-spacing:-0.150px;left:430.22px;font-style:italic;-webkit-text-stroke:0.1px;">11,99</div>
<div class="t" style="top:322.60px;font-size:7.20px;letter-spacing:-0.220px;left:478.61px;">5.995,00</div>
<div class="t" style="top:322.60px;font-size:7.20px;letter-spacing:-0.150px;left:536.12px;font-style:italic;-webkit-text-stroke:0.1px;">5.995,00</div>
<div class="t" style="top:322.60px;font-size:7.30px;letter-spacing:0.130px;left:583.84px;font-weight:bold;-webkit-text-stroke:0.18px;">1</div>
<div class="t" style="top:322.60px;font-size:7.30px;letter-spacing:0.220px;left:642.93px;font-weight:bold;-webkit-text-stroke:0.18px;font-style:italic;">9,00</div>
<div class="t" style="top:322.60px;font-size:7.30px;letter-spacing:0.220px;left:686.14px;font-weight:bold;-webkit-text-stroke:0.18px;font-style:italic;">4.500,00</div>
<div class="t" style="top:322.60px;font-size:7.20px;letter-spacing:-0.150px;left:730.03px;font-style:italic;-webkit-text-stroke:0.1px;">-24,94 %</div>
<div class="t" style="top:322.60px;font-size:7.20px;letter-spacing:-0.150px;left:785.87px;font-style:italic;-webkit-text-stroke:0.1px;">-1.495,00</div>
<div class="t" style="top:322.60px;font-size:7.20px;letter-spacing:-0.150px;left:829.33px;font-style:italic;-webkit-text-stroke:0.1px;">-24,94 %</div>
<div class="t" style="top:322.60px;font-size:7.20px;letter-spacing:-0.150px;left:885.87px;font-style:italic;-webkit-text-stroke:0.1px;">-1.495,00</div>
<div class="t" style="top:322.60px;font-size:7.30px;letter-spacing:0.130px;left:1034.54px;font-weight:bold;-webkit-text-stroke:0.18px;">4</div>
<div class="t" style="top:322.60px;font-size:7.30px;letter-spacing:0.220px;left:1089.45px;font-weight:bold;-webkit-text-stroke:0.18px;font-style:italic;">12,00</div>
<div class="t" style="top:322.60px;font-size:7.30px;letter-spacing:0.220px;left:1136.54px;font-weight:bold;-webkit-text-stroke:0.18px;font-style:italic;">6.000,00</div>
<div class="r" style="left:53.00px;top:334.44px;width:1133.00px;height:13.09px;background:#ececec;"></div>
<div class="r" style="left:53.00px;top:346.93px;width:1133.00px;height:1.00px;background:#cdcdcd;"></div>
<div class="r" style="left:53.00px;top:334.44px;width:1.00px;height:13.09px;background:#cdcdcd;"></div>
<div class="r" style="left:94.30px;top:334.44px;width:1.00px;height:13.09px;background:#cdcdcd;"></div>
<div class="r" style="left:144.00px;top:334.44px;width:1.00px;height:13.09px;background:#cdcdcd;"></div>
<div class="r" style="left:257.30px;top:334.44px;width:1.00px;height:13.09px;background:#cdcdcd;"></div>
<div class="r" style="left:308.30px;top:334.44px;width:1.00px;height:13.09px;background:#cdcdcd;"></div>
<div class="r" style="left:334.30px;top:334.44px;width:1.00px;height:13.09px;background:#cdcdcd;"></div>
<div class="r" style="left:392.30px;top:334.44px;width:1.00px;height:13.09px;background:#cdcdcd;"></div>
<div class="r" style="left:449.30px;top:334.44px;width:1.00px;height:13.09px;background:#cdcdcd;"></div>
<div class="r" style="left:507.30px;top:334.44px;width:1.00px;height:13.09px;background:#cdcdcd;"></div>
<div class="r" style="left:565.30px;top:334.44px;width:1.00px;height:13.09px;background:#cdcdcd;"></div>
<div class="r" style="left:590.10px;top:334.44px;width:1.00px;height:13.09px;background:#cdcdcd;"></div>
<div class="r" style="left:660.00px;top:334.44px;width:1.00px;height:13.09px;background:#cdcdcd;"></div>
<div class="r" style="left:718.30px;top:334.44px;width:1.00px;height:13.09px;background:#cdcdcd;"></div>
<div class="r" style="left:760.00px;top:334.44px;width:1.00px;height:13.09px;background:#cdcdcd;"></div>
<div class="r" style="left:817.30px;top:334.44px;width:1.00px;height:13.09px;background:#cdcdcd;"></div>
<div class="r" style="left:859.30px;top:334.44px;width:1.00px;height:13.09px;background:#cdcdcd;"></div>
<div class="r" style="left:917.30px;top:334.44px;width:1.00px;height:13.09px;background:#cdcdcd;"></div>
<div class="r" style="left:959.00px;top:334.44px;width:1.00px;height:13.09px;background:#cdcdcd;"></div>
<div class="r" style="left:1015.80px;top:334.44px;width:1.00px;height:13.09px;background:#cdcdcd;"></div>
<div class="r" style="left:1040.80px;top:334.44px;width:1.00px;height:13.09px;background:#cdcdcd;"></div>
<div class="r" style="left:1110.80px;top:334.44px;width:1.00px;height:13.09px;background:#cdcdcd;"></div>
<div class="r" style="left:1168.70px;top:334.44px;width:1.00px;height:13.09px;background:#cdcdcd;"></div>
<div class="t" style="top:335.69px;font-size:7.30px;letter-spacing:0.130px;left:146.50px;font-weight:bold;-webkit-text-stroke:0.18px;">Summe(Netto):</div>
<div class="t" style="top:335.69px;font-size:7.30px;letter-spacing:0.220px;left:470.86px;font-weight:bold;-webkit-text-stroke:0.18px;font-style:italic;text-decoration:underline;text-decoration-thickness:0.7px;text-underline-offset:0.7px;">26.651,00</div>
<div class="t" style="top:335.69px;font-size:7.30px;letter-spacing:0.220px;left:528.86px;font-weight:bold;-webkit-text-stroke:0.18px;font-style:italic;text-decoration:underline;text-decoration-thickness:0.7px;text-underline-offset:0.7px;">26.651,00</div>
<div class="t" style="top:335.69px;font-size:7.30px;letter-spacing:0.220px;left:681.86px;font-weight:bold;-webkit-text-stroke:0.18px;font-style:italic;text-decoration:underline;text-decoration-thickness:0.7px;text-underline-offset:0.7px;">20.000,00</div>
<div class="t" style="top:335.69px;font-size:7.30px;letter-spacing:0.220px;left:727.04px;font-weight:bold;-webkit-text-stroke:0.18px;font-style:italic;text-decoration:underline;text-decoration-thickness:0.7px;text-underline-offset:0.7px;">-24,96 %</div>
<div class="t" style="top:335.69px;font-size:7.30px;letter-spacing:0.220px;left:782.49px;font-weight:bold;-webkit-text-stroke:0.18px;font-style:italic;text-decoration:underline;text-decoration-thickness:0.7px;text-underline-offset:0.7px;">-6.651,00</div>
<div class="t" style="top:335.69px;font-size:7.30px;letter-spacing:0.220px;left:826.34px;font-weight:bold;-webkit-text-stroke:0.18px;font-style:italic;text-decoration:underline;text-decoration-thickness:0.7px;text-underline-offset:0.7px;">-24,96 %</div>
<div class="t" style="top:335.69px;font-size:7.30px;letter-spacing:0.220px;left:882.49px;font-weight:bold;-webkit-text-stroke:0.18px;font-style:italic;text-decoration:underline;text-decoration-thickness:0.7px;text-underline-offset:0.7px;">-6.651,00</div>
<div class="t" style="top:335.69px;font-size:7.30px;letter-spacing:0.220px;left:932.97px;font-weight:bold;-webkit-text-stroke:0.18px;font-style:italic;text-decoration:underline;text-decoration-thickness:0.7px;text-underline-offset:0.7px;">5,82 %</div>
<div class="t" style="top:335.69px;font-size:7.30px;letter-spacing:0.220px;left:983.64px;font-weight:bold;-webkit-text-stroke:0.18px;font-style:italic;text-decoration:underline;text-decoration-thickness:0.7px;text-underline-offset:0.7px;">1.100,00</div>
<div class="t" style="top:335.69px;font-size:7.30px;letter-spacing:0.220px;left:1132.26px;font-weight:bold;-webkit-text-stroke:0.18px;font-style:italic;text-decoration:underline;text-decoration-thickness:0.7px;text-underline-offset:0.7px;">20.500,00</div>
<div class="t" style="top:335.69px;font-size:7.30px;letter-spacing:0.220px;left:1176.00px;font-weight:bold;-webkit-text-stroke:0.18px;font-style:italic;text-decoration:underline;text-decoration-thickness:0.7px;text-underline-offset:0.7px;">-2:</div>
<div class="r" style="left:53.00px;top:347.53px;width:1133.00px;height:13.09px;background:#fff;"></div>
<div class="r" style="left:53.00px;top:360.02px;width:1133.00px;height:1.00px;background:#cdcdcd;"></div>
<div class="r" style="left:53.00px;top:347.53px;width:1.00px;height:13.09px;background:#cdcdcd;"></div>
<div class="r" style="left:94.30px;top:347.53px;width:1.00px;height:13.09px;background:#cdcdcd;"></div>
<div class="r" style="left:144.00px;top:347.53px;width:1.00px;height:13.09px;background:#cdcdcd;"></div>
<div class="r" style="left:257.30px;top:347.53px;width:1.00px;height:13.09px;background:#cdcdcd;"></div>
<div class="r" style="left:308.30px;top:347.53px;width:1.00px;height:13.09px;background:#cdcdcd;"></div>
<div class="r" style="left:334.30px;top:347.53px;width:1.00px;height:13.09px;background:#cdcdcd;"></div>
<div class="r" style="left:392.30px;top:347.53px;width:1.00px;height:13.09px;background:#cdcdcd;"></div>
<div class="r" style="left:449.30px;top:347.53px;width:1.00px;height:13.09px;background:#cdcdcd;"></div>
<div class="r" style="left:507.30px;top:347.53px;width:1.00px;height:13.09px;background:#cdcdcd;"></div>
<div class="r" style="left:565.30px;top:347.53px;width:1.00px;height:13.09px;background:#cdcdcd;"></div>
<div class="r" style="left:590.10px;top:347.53px;width:1.00px;height:13.09px;background:#cdcdcd;"></div>
<div class="r" style="left:660.00px;top:347.53px;width:1.00px;height:13.09px;background:#cdcdcd;"></div>
<div class="r" style="left:718.30px;top:347.53px;width:1.00px;height:13.09px;background:#cdcdcd;"></div>
<div class="r" style="left:760.00px;top:347.53px;width:1.00px;height:13.09px;background:#cdcdcd;"></div>
<div class="r" style="left:817.30px;top:347.53px;width:1.00px;height:13.09px;background:#cdcdcd;"></div>
<div class="r" style="left:859.30px;top:347.53px;width:1.00px;height:13.09px;background:#cdcdcd;"></div>
<div class="r" style="left:917.30px;top:347.53px;width:1.00px;height:13.09px;background:#cdcdcd;"></div>
<div class="r" style="left:959.00px;top:347.53px;width:1.00px;height:13.09px;background:#cdcdcd;"></div>
<div class="r" style="left:1015.80px;top:347.53px;width:1.00px;height:13.09px;background:#cdcdcd;"></div>
<div class="r" style="left:1040.80px;top:347.53px;width:1.00px;height:13.09px;background:#cdcdcd;"></div>
<div class="r" style="left:1110.80px;top:347.53px;width:1.00px;height:13.09px;background:#cdcdcd;"></div>
<div class="r" style="left:1168.70px;top:347.53px;width:1.00px;height:13.09px;background:#cdcdcd;"></div>
<div class="t" style="top:348.77px;font-size:7.30px;letter-spacing:0.130px;left:146.50px;font-weight:bold;-webkit-text-stroke:0.18px;">Steuer:</div>
<div class="t" style="top:348.77px;font-size:7.30px;letter-spacing:0.220px;left:475.14px;font-weight:bold;-webkit-text-stroke:0.18px;font-style:italic;text-decoration:underline;text-decoration-thickness:0.7px;text-underline-offset:0.7px;">5.063,69</div>
<div class="t" style="top:348.77px;font-size:7.30px;letter-spacing:0.220px;left:533.14px;font-weight:bold;-webkit-text-stroke:0.18px;font-style:italic;text-decoration:underline;text-decoration-thickness:0.7px;text-underline-offset:0.7px;">5.063,69</div>
<div class="t" style="top:348.77px;font-size:7.30px;letter-spacing:0.220px;left:686.14px;font-weight:bold;-webkit-text-stroke:0.18px;font-style:italic;text-decoration:underline;text-decoration-thickness:0.7px;text-underline-offset:0.7px;">3.800,00</div>
<div class="t" style="top:348.77px;font-size:7.30px;letter-spacing:0.220px;left:1136.54px;font-weight:bold;-webkit-text-stroke:0.18px;font-style:italic;text-decoration:underline;text-decoration-thickness:0.7px;text-underline-offset:0.7px;">3.895,00</div>
<div class="r" style="left:53.00px;top:360.62px;width:1133.00px;height:13.09px;background:#ececec;"></div>
<div class="r" style="left:53.00px;top:373.11px;width:1133.00px;height:1.00px;background:#cdcdcd;"></div>
<div class="r" style="left:53.00px;top:360.62px;width:1.00px;height:13.09px;background:#cdcdcd;"></div>
<div class="r" style="left:94.30px;top:360.62px;width:1.00px;height:13.09px;background:#cdcdcd;"></div>
<div class="r" style="left:144.00px;top:360.62px;width:1.00px;height:13.09px;background:#cdcdcd;"></div>
<div class="r" style="left:257.30px;top:360.62px;width:1.00px;height:13.09px;background:#cdcdcd;"></div>
<div class="r" style="left:308.30px;top:360.62px;width:1.00px;height:13.09px;background:#cdcdcd;"></div>
<div class="r" style="left:334.30px;top:360.62px;width:1.00px;height:13.09px;background:#cdcdcd;"></div>
<div class="r" style="left:392.30px;top:360.62px;width:1.00px;height:13.09px;background:#cdcdcd;"></div>
<div class="r" style="left:449.30px;top:360.62px;width:1.00px;height:13.09px;background:#cdcdcd;"></div>
<div class="r" style="left:507.30px;top:360.62px;width:1.00px;height:13.09px;background:#cdcdcd;"></div>
<div class="r" style="left:565.30px;top:360.62px;width:1.00px;height:13.09px;background:#cdcdcd;"></div>
<div class="r" style="left:590.10px;top:360.62px;width:1.00px;height:13.09px;background:#cdcdcd;"></div>
<div class="r" style="left:660.00px;top:360.62px;width:1.00px;height:13.09px;background:#cdcdcd;"></div>
<div class="r" style="left:718.30px;top:360.62px;width:1.00px;height:13.09px;background:#cdcdcd;"></div>
<div class="r" style="left:760.00px;top:360.62px;width:1.00px;height:13.09px;background:#cdcdcd;"></div>
<div class="r" style="left:817.30px;top:360.62px;width:1.00px;height:13.09px;background:#cdcdcd;"></div>
<div class="r" style="left:859.30px;top:360.62px;width:1.00px;height:13.09px;background:#cdcdcd;"></div>
<div class="r" style="left:917.30px;top:360.62px;width:1.00px;height:13.09px;background:#cdcdcd;"></div>
<div class="r" style="left:959.00px;top:360.62px;width:1.00px;height:13.09px;background:#cdcdcd;"></div>
<div class="r" style="left:1015.80px;top:360.62px;width:1.00px;height:13.09px;background:#cdcdcd;"></div>
<div class="r" style="left:1040.80px;top:360.62px;width:1.00px;height:13.09px;background:#cdcdcd;"></div>
<div class="r" style="left:1110.80px;top:360.62px;width:1.00px;height:13.09px;background:#cdcdcd;"></div>
<div class="r" style="left:1168.70px;top:360.62px;width:1.00px;height:13.09px;background:#cdcdcd;"></div>
<div class="t" style="top:361.87px;font-size:7.30px;letter-spacing:0.130px;left:146.50px;font-weight:bold;-webkit-text-stroke:0.18px;">Summe(Brutto):</div>
<div class="t" style="top:361.87px;font-size:7.30px;letter-spacing:0.220px;left:470.86px;font-weight:bold;-webkit-text-stroke:0.18px;font-style:italic;text-decoration:underline;text-decoration-thickness:0.7px;text-underline-offset:0.7px;">31.714,69</div>
<div class="t" style="top:361.87px;font-size:7.30px;letter-spacing:0.220px;left:528.86px;font-weight:bold;-webkit-text-stroke:0.18px;font-style:italic;text-decoration:underline;text-decoration-thickness:0.7px;text-underline-offset:0.7px;">31.714,69</div>
<div class="t" style="top:361.87px;font-size:7.30px;letter-spacing:0.220px;left:681.86px;font-weight:bold;-webkit-text-stroke:0.18px;font-style:italic;text-decoration:underline;text-decoration-thickness:0.7px;text-underline-offset:0.7px;">23.800,00</div>
<div class="t" style="top:361.87px;font-size:7.30px;letter-spacing:0.220px;left:1132.26px;font-weight:bold;-webkit-text-stroke:0.18px;font-style:italic;text-decoration:underline;text-decoration-thickness:0.7px;text-underline-offset:0.7px;">24.395,00</div>
<div class="r" style="left:565.30px;top:255.90px;width:1.00px;height:117.81px;background:#858585;"></div>
<div class="r" style="left:53.00px;top:255.90px;width:41.80px;height:13.09px;background:#cfe5df;box-shadow:inset 0 0 0 1px #8fa9a4;"></div>
<div class="r" style="left:15.00px;top:256.00px;width:14.00px;height:117.71px;background:#fff;"></div>
<div class="r" style="left:28.70px;top:268.00px;width:1.00px;height:105.71px;background:#dcdcdc;"></div>
<div class="r" style="left:15.00px;top:633.00px;width:1171.00px;height:13.00px;background:#f0f0f0;"></div>
<div class="r" style="left:15.50px;top:633.00px;width:10.50px;height:9.70px;background:#f4f4f4;box-shadow:inset 0 0 0 1px #a6a6a6;"></div>
<svg class="r" style="left:18.60px;top:635.60px" width="4" height="5" viewBox="0 0 4 5"><path d="M3.2 0.4 L0.6 2.5 L3.2 4.6Z" fill="#222"/></svg>
<div class="r" style="left:26.00px;top:633.00px;width:426.50px;height:9.70px;background:#fff;box-shadow:inset 0 0 0 1px #929292;"></div>
<div class="r" style="left:1175.00px;top:633.30px;width:10.00px;height:9.20px;background:#f8f8f8;box-shadow:inset 0 0 0 1px #b2b2b2;"></div>
<svg class="r" style="left:1178.40px;top:635.50px" width="4" height="5" viewBox="0 0 4 5"><path d="M0.8 0.4 L3.4 2.5 L0.8 4.6Z" fill="#222"/></svg>
<div class="r" style="left:16.30px;top:646.00px;width:34.70px;height:11.50px;background:#e2e2e2;box-shadow:inset 0 0 0 1px #cfcfcf;"></div>
<div class="r" style="left:53.00px;top:646.00px;width:35.00px;height:11.50px;background:#e2e2e2;box-shadow:inset 0 0 0 1px #cfcfcf;"></div>
<div class="t" style="top:647.20px;font-size:7.20px;letter-spacing:-0.051px;left:20.07px;">Kurztext</div>
<div class="t" style="top:647.20px;font-size:7.20px;letter-spacing:-0.078px;left:57.06px;">Langtext</div>
<div class="r" style="left:0.00px;top:657.30px;width:1200.00px;height:17.70px;background:#dbdbdb;"></div>
<div class="r" style="left:0.00px;top:657.30px;width:1200.00px;height:1.00px;background:#cfcfcf;"></div>
<div class="t" style="top:661.50px;font-size:7.30px;letter-spacing:0.170px;left:3.50px;font-weight:bold;-webkit-text-stroke:0.18px;">2026.1 vom 15.01.2026</div>
<div class="r" style="left:88.00px;top:659.00px;width:1.00px;height:13.00px;background:#c4c4c4;"></div>
<div class="r" style="left:89.00px;top:659.00px;width:1.00px;height:13.00px;background:#efefef;"></div>
<div class="t" style="top:661.50px;font-size:7.30px;letter-spacing:0.056px;left:93.00px;font-weight:bold;-webkit-text-stroke:0.18px;">Nachunternehmer: Analyse</div>
<div class="t" style="top:661.70px;font-size:7.20px;letter-spacing:-0.320px;left:864.00px;">200: VT-200-Husemann ,Fritz GmbH</div>
<div class="r" style="left:975.30px;top:659.00px;width:1.00px;height:13.00px;background:#c4c4c4;"></div>
<div class="r" style="left:976.30px;top:659.00px;width:1.00px;height:13.00px;background:#efefef;"></div>
<div class="r" style="left:1009.00px;top:659.00px;width:1.00px;height:13.00px;background:#c4c4c4;"></div>
<div class="r" style="left:1010.00px;top:659.00px;width:1.00px;height:13.00px;background:#efefef;"></div>
<div class="r" style="left:1108.30px;top:659.00px;width:1.00px;height:13.00px;background:#c4c4c4;"></div>
<div class="r" style="left:1109.30px;top:659.00px;width:1.00px;height:13.00px;background:#efefef;"></div>
<div class="r" style="left:1180.00px;top:659.00px;width:1.00px;height:13.00px;background:#c4c4c4;"></div>
<div class="r" style="left:1181.00px;top:659.00px;width:1.00px;height:13.00px;background:#efefef;"></div>
<div class="r" style="left:979.00px;top:662.00px;width:10.30px;height:2.40px;background:#111;"></div>
<div class="r" style="left:979.00px;top:664.40px;width:10.30px;height:2.30px;background:#dd1f1f;"></div>
<div class="r" style="left:979.00px;top:666.70px;width:10.30px;height:2.40px;background:#f5c400;"></div>
<div class="t" style="top:661.70px;font-size:7.20px;letter-spacing:-1.067px;left:992.00px;">DEU</div>
<svg class="r" style="left:1013.70px;top:661.60px" width="9" height="9" viewBox="0 0 9 9"><circle cx="4.5" cy="4.5" r="4.3" fill="#1f9d3a"/><path d="M2.3 4.6 L4 6.3 L6.9 3" fill="none" stroke="#fff" stroke-width="1.3"/></svg>
<div class="t" style="top:661.70px;font-size:7.20px;letter-spacing:-0.235px;left:1026.00px;">Mit Dokuarchiv verbunden</div>
<div class="t" style="top:661.70px;font-size:7.20px;letter-spacing:-0.241px;left:1113.00px;">182: Klein, Alexander</div>
<div class="t" style="top:661.70px;font-size:7.20px;letter-spacing:-0.870px;left:1185.00px;">ALK</div>
<div class="r" style="left:0.00px;top:673.30px;width:1200.00px;height:2.00px;background:#0a0a0a;"></div>
<div class="r" style="left:30.00px;top:673.30px;width:215.00px;height:2.00px;background:#b4b4b4;"></div>
<div class="r" style="left:0.00px;top:98.50px;width:12.50px;height:38.50px;background:#e4e4e4;box-shadow:inset 0 0 0 1px #cfcfcf;"></div>
<div class="t" style="left:1.50px;top:98.50px;width:38.50px;text-align:center;letter-spacing:-0.020px;transform-origin:0 0;transform:rotate(90deg) translate(0,-10.00px);">Favoriten</div>
<div class="r" style="left:0.00px;top:137.00px;width:12.50px;height:72.50px;background:#e4e4e4;box-shadow:inset 0 0 0 1px #cfcfcf;"></div>
<div class="t" style="left:1.50px;top:137.00px;width:72.50px;text-align:center;letter-spacing:-0.134px;transform-origin:0 0;transform:rotate(90deg) translate(0,-10.00px);">Menü - HF Standard</div>
<div class="r" style="left:1187.50px;top:115.40px;width:12.00px;height:51.00px;background:#e4e4e4;box-shadow:inset 0 0 0 1px #cfcfcf;"></div>
<div class="t" style="left:1189.00px;top:115.40px;width:51.00px;text-align:center;letter-spacing:-0.025px;transform-origin:0 0;transform:rotate(90deg) translate(0,-10.00px);">Gebot: Details</div>
<div class="r" style="left:1187.50px;top:170.00px;width:12.00px;height:80.50px;background:#e4e4e4;box-shadow:inset 0 0 0 1px #cfcfcf;"></div>
<div class="t" style="left:1189.00px;top:170.00px;width:80.50px;text-align:center;letter-spacing:-0.120px;transform-origin:0 0;transform:rotate(90deg) translate(0,-10.00px);">Zugewiesene AVA-KOA</div>
<div class="r" style="left:1187.50px;top:252.40px;width:12.00px;height:60.40px;background:#f4f4f4;box-shadow:inset 0 0 0 1px #cfcfcf;"></div>
<div class="t" style="left:1189.00px;top:252.40px;width:60.40px;text-align:center;letter-spacing:0.176px;transform-origin:0 0;transform:rotate(90deg) translate(0,-10.00px);">Elementreferenz</div>
<svg class="r" style="left:6.70px;top:5.20px" width="9.2" height="9.5" viewBox="0 0 9.2 9.5"><rect x="0" y="0" width="9.2" height="9.5" rx="1" fill="#fff"/><path d="M1.9 8 L4.1 1.7 L5.3 1.7 L7.5 8 L6.2 8 L5.7 6.4 L3.6 6.4 L3.1 8 Z M3.9 5.3 L5.4 5.3 L4.65 3 Z" fill="#04888d" fill-rule="evenodd"/></svg>
<svg class="r" style="left:22.00px;top:6.00px" width="10" height="8" viewBox="0 0 10 8"><path d="M0.5 0.9 Q0.5 0.4 1 0.4 L3.4 0.4 L4.3 1.4 L7.6 1.4 Q8 1.4 8 1.9 L8 2.9 L3 2.9 L1.3 7.3 L0.5 7.3 Z" fill="#fff"/><path d="M3.4 3.5 L9.7 3.5 L8.2 7.6 L1.9 7.6 Z" fill="#fff"/></svg>
<svg class="r" style="left:36.40px;top:8.00px" width="5.2" height="3.4" viewBox="0 0 5.2 3.4"><path d="M0.5 0.6 L2.6 2.7 L4.7 0.6" fill="none" stroke="#fff" stroke-width="1.3"/></svg>
<svg class="r" style="left:48.00px;top:6.60px" width="8" height="7.4" viewBox="0 0 8 7.4"><path d="M0.3 0.3 H7.7 V7.1 H0.3 Z M1.7 0.3 V3.2 H6.3 V0.3 M2.2 7.1 V4.8 H5.8 V7.1" fill="none" stroke="#cde8d5" stroke-width="1.25"/></svg>
<svg class="r" style="left:67.00px;top:9.00px" width="3.6" height="2" viewBox="0 0 3.6 2"><path d="M0 0 H3.6 L1.8 2 Z" fill="#fff"/></svg>
<div class="r" style="left:1122.50px;top:10.00px;width:7.00px;height:1.00px;background:#fff;"></div>
<svg class="r" style="left:1151.30px;top:6.60px" width="8" height="7.5" viewBox="0 0 8 7.5"><path d="M0.5 2.2 H5.5 V7 H0.5 Z M2 2.2 V0.6 H7.4 V5.4 H5.5" fill="none" stroke="#fff" stroke-width="0.9"/></svg>
<svg class="r" style="left:1182.50px;top:6.80px" width="7" height="7" viewBox="0 0 7 7"><path d="M0.5 0.5 L6.5 6.5 M6.5 0.5 L0.5 6.5" stroke="#fff" stroke-width="1"/></svg>
<svg class="r" style="left:231.80px;top:24.80px" width="6" height="6.5" viewBox="0 0 6 6.5"><circle cx="3.7" cy="2.4" r="1.9" fill="none" stroke="#444" stroke-width="0.7"/><path d="M2.4 3.8 L0.4 6" stroke="#444" stroke-width="0.8"/></svg>
<svg class="r" style="left:1191.40px;top:89.00px" width="5.4" height="3.4" viewBox="0 0 5.4 3.4"><path d="M0.4 3 L2.7 0.6 L5 3" fill="none" stroke="#333" stroke-width="0.9"/></svg>
<svg class="r" style="left:1193.70px;top:104.80px" width="3.4" height="2" viewBox="0 0 3.4 2"><path d="M0 0 H3.4 L1.7 2 Z" fill="#222"/></svg>
<svg class="r" style="left:1090.40px;top:74.00px" width="5.4" height="3.6" viewBox="0 0 5.4 3.6"><path d="M0.4 0.5 L2.7 2.9 L5 0.5" fill="none" stroke="#333" stroke-width="1"/></svg>
<svg class="r" style="left:1122.90px;top:74.00px" width="5.4" height="3.6" viewBox="0 0 5.4 3.6"><path d="M0.4 0.5 L2.7 2.9 L5 0.5" fill="none" stroke="#333" stroke-width="1"/></svg>
<svg class="r" style="left:465.50px;top:103.00px" width="5.6" height="5" viewBox="0 0 5.6 5"><path d="M0 2.5 H2 M2 1 V4 M2 1.4 H4.6 V3.6 H2 M2 3 H4.6" fill="none" stroke="#555" stroke-width="0.6"/></svg>
<svg class="r" style="left:477.70px;top:103.10px" width="5.2" height="5.2" viewBox="0 0 5.2 5.2"><path d="M0.4 0.4 L4.8 4.8 M4.8 0.4 L0.4 4.8" stroke="#333" stroke-width="0.7"/></svg>
<svg class="r" style="left:1011.00px;top:120.20px" width="3.4" height="2" viewBox="0 0 3.4 2"><path d="M0 0 H3.4 L1.7 2 Z" fill="#333"/></svg>
<svg class="r" style="left:1045.00px;top:151.00px" width="3.4" height="2" viewBox="0 0 3.4 2"><path d="M0 0 H3.4 L1.7 2 Z" fill="#333"/></svg>
<svg class="r" style="left:529.50px;top:166.00px" width="3.4" height="2" viewBox="0 0 3.4 2"><path d="M0 0 H3.4 L1.7 2 Z" fill="#333"/></svg>
<svg class="r" style="left:519.80px;top:165.00px" width="3.8" height="3.8" viewBox="0 0 3.8 3.8"><path d="M0.4 0.4 L3.4 3.4 M3.4 0.4 L0.4 3.4" stroke="#d01828" stroke-width="1.05"/></svg>
<svg class="r" style="left:9.00px;top:42.50px" width="15" height="17.5" viewBox="0 0 15 17.5"><path d="M0.6 0.6 H9.6 L14.2 5.2 V16.6 H0.6 Z" fill="#e0e0e0" stroke="#bdbdbd" stroke-width="1"/><path d="M9.6 0.6 V5.2 H14.2" fill="#ececec" stroke="#bdbdbd" stroke-width="0.8"/></svg>
<svg class="r" style="left:45.00px;top:42.50px" width="17" height="18" viewBox="0 0 17 18"><path d="M0.7 0.7 H9.8 L14.4 5.3 V11 M9 16.7 H0.7 V0.7" fill="none" stroke="#3d3d42" stroke-width="1.3"/><path d="M9.8 0.7 V5.3 H14.4" fill="#fff" stroke="#3d3d42" stroke-width="1"/><path d="M6.3 10.2 h3 M7.8 8.7 v3" stroke="#e8202a" stroke-width="1.1"/><path d="M10.2 11.8 h3 M11.7 10.5 v2.4" stroke="#27a046" stroke-width="1.2"/><path d="M10 17 L12 12.8 L13.6 15 L16 10.5 M10.5 16.8 H15.8 V13" fill="none" stroke="#5b9be0" stroke-width="1.1"/></svg>
<svg class="r" style="left:90.50px;top:44.00px" width="15" height="15" viewBox="0 0 15 15"><path d="M0.5 0.5 H14.5 V14.5 H0.5 Z" fill="#bcbcbc"/><rect x="2.6" y="1.4" width="9.8" height="5.6" fill="#d6d6d6"/><rect x="3.8" y="9.4" width="7.4" height="5.1" fill="#d6d6d6"/><rect x="8.3" y="10.4" width="1.8" height="3" fill="#bcbcbc"/></svg>
<svg class="r" style="left:127.00px;top:42.50px" width="17.5" height="17.5" viewBox="0 0 17.5 17.5"><path d="M0.6 4.2 H10.8 L9.6 11.2 H2.2 Z" fill="#d2d2d2" stroke="#b9b9b9" stroke-width="1"/><path d="M3.2 2 H8.6 V6 H3.2Z" fill="#cfcfcf" stroke="#b9b9b9" stroke-width="0.8"/><path d="M15.6 1 Q12.5 1.6 12 4.6 L10.6 12.8 H1.6" fill="none" stroke="#b9b9b9" stroke-width="1.1"/><rect x="1.2" y="14.6" width="2.2" height="2.2" fill="#b9b9b9"/><path d="M10.6 12.6 L16.4 17 M16.4 12.6 L10.6 17" stroke="#b9b9b9" stroke-width="1.5"/></svg>
<svg class="r" style="left:156.00px;top:42.50px" width="16" height="17.5" viewBox="0 0 16 17.5"><circle cx="6" cy="4.8" r="4.4" fill="#b9b9b9"/><path d="M0 16.8 Q0 10.2 6 10.2 Q9.4 10.2 10.6 12.6 L9 16.8 Z" fill="#b9b9b9"/><path d="M9.6 12 L15.2 16.9 M15.2 12 L9.6 16.9" stroke="#b9b9b9" stroke-width="1.5"/></svg>
<svg class="r" style="left:194.50px;top:43.40px" width="16.6" height="16.8" viewBox="0 0 16.6 16.8"><path d="M2.4 12.8 V7.4 Q2.4 3.7 6 3.7 H7.2" fill="none" stroke="#1f70cc" stroke-width="2.7"/><path d="M6.8 0.4 L10.8 3.7 L6.8 7 Z" fill="#1f70cc"/><path d="M14.2 4 V9.4 Q14.2 13.1 10.6 13.1 H9.4" fill="none" stroke="#1f70cc" stroke-width="2.7"/><path d="M9.8 9.8 L5.8 13.1 L9.8 16.4 Z" fill="#1f70cc"/></svg>
<svg class="r" style="left:236.50px;top:42.50px" width="18" height="17.5" viewBox="0 0 18 17.5"><path d="M3.6 15.8 L16 3.2" stroke="#bdbdbd" stroke-width="3" stroke-linecap="round"/><path d="M4 15.4 L10 9.3" stroke="#e6e6e6" stroke-width="1.3"/><path d="M11.4 7.9 L15.6 3.6" stroke="#e6e6e6" stroke-width="1.3"/><path d="M4.4 0.6 V6.8 M1.6 2.2 L7.2 5.4 M7.2 2.2 L1.6 5.4" stroke="#b0b0b0" stroke-width="1"/><rect x="10.4" y="0.8" width="1.5" height="1.5" fill="#b0b0b0"/></svg>
<div class="t" style="top:41.30px;font-size:6.40px;letter-spacing:0.000px;left:282.02px;font-weight:bold;-webkit-text-stroke:0.18px;color:#2a62d8;">1</div>
<div class="t" style="top:50.00px;font-size:6.40px;letter-spacing:0.000px;left:282.02px;font-weight:bold;-webkit-text-stroke:0.18px;color:#2a62d8;">2</div>
<div class="r" style="left:288.00px;top:44.10px;width:9.00px;height:1.20px;background:#3b3b40;"></div>
<div class="r" style="left:288.00px;top:46.50px;width:9.00px;height:1.20px;background:#3b3b40;"></div>
<div class="r" style="left:288.00px;top:48.90px;width:4.20px;height:1.20px;background:#3b3b40;"></div>
<div class="r" style="left:288.00px;top:52.70px;width:9.00px;height:1.20px;background:#3b3b40;"></div>
<div class="r" style="left:288.00px;top:55.10px;width:9.00px;height:1.20px;background:#3b3b40;"></div>
<div class="r" style="left:288.00px;top:57.50px;width:6.00px;height:1.20px;background:#3b3b40;"></div>
<svg class="r" style="left:326.50px;top:42.50px" width="15" height="17.5" viewBox="0 0 15 17.5"><path d="M0.7 0.7 H8.4 V7.2 H13.8 V16.8 H0.7 Z" fill="#fff" stroke="#3d3d42" stroke-width="1.3"/><rect x="2.6" y="2.6" width="1.3" height="2" fill="#2f7fd6"/><rect x="2.6" y="6.0" width="1.3" height="2" fill="#2f7fd6"/><rect x="2.6" y="9.4" width="1.3" height="2" fill="#2f7fd6"/><rect x="5.4" y="2.6" width="1.3" height="2" fill="#2f7fd6"/><rect x="5.4" y="6.0" width="1.3" height="2" fill="#2f7fd6"/><rect x="5.4" y="9.4" width="1.3" height="2" fill="#2f7fd6"/><rect x="8.6" y="9.4" width="1.3" height="2" fill="#2f7fd6"/><rect x="8.6" y="12.8" width="1.3" height="2" fill="#2f7fd6"/><rect x="11.2" y="9.4" width="1.3" height="2" fill="#2f7fd6"/><rect x="11.2" y="12.8" width="1.3" height="2" fill="#2f7fd6"/><rect x="2.6" y="12.8" width="1.3" height="2" fill="#2f7fd6"/><rect x="4.6" y="13.6" width="2" height="3.2" fill="#3d3d42"/><path d="M9.6 5.4 L13.4 1.2 M10.4 1.4 L12.6 4.8 M9.4 3.2 H13.8" stroke="#e8882a" stroke-width="0.8"/></svg>
<svg class="r" style="left:375.50px;top:42.50px" width="17" height="17.5" viewBox="0 0 17 17.5"><path d="M0.7 2.6 Q0.7 0.7 2.6 0.7 H13 Q15.8 0.7 15.8 3 Q15.8 4.6 13.6 4.6 H12.4 V13 Q15.8 13 15.8 15 Q15.8 16.8 13.6 16.8 H2.6 Q0.7 16.8 0.7 14.9 Z" fill="#fff" stroke="#3d3d42" stroke-width="1.3"/><path d="M2.8 3.2 H10 M2.8 6.2 H5.4 M6.8 6.2 H10 M2.8 9 H5.4 M6.8 9 H10 M2.8 11.8 H5.4 M6.8 11.8 H10 M2.8 14.4 H6.4" stroke="#1f62d8" stroke-width="1.2"/></svg>
<svg class="r" style="left:419.00px;top:42.50px" width="17.5" height="17.5" viewBox="0 0 17.5 17.5"><path d="M3.4 9.4 V2.4 Q3.4 0.7 5.2 0.7 H14.2 Q16.6 0.7 16.6 2.8 Q16.6 4.6 14.6 4.6 H13.2 V9.4" fill="#fff" stroke="#3d3d42" stroke-width="1.3"/><path d="M5.4 3 H11 M5.4 5.6 H7 M8 5.6 H9.2 M10 5.6 H11.2 M5.4 8 H7.4 M8.4 8 H11" stroke="#2f7fd6" stroke-width="1"/><rect x="0.6" y="9.4" width="14.8" height="7.6" rx="1.4" fill="#5a5a5f"/><rect x="2.6" y="11" width="3.4" height="1" fill="#fff"/></svg>
<svg class="r" style="left:460.00px;top:42.50px" width="17.5" height="17" viewBox="0 0 17.5 17"><path d="M4.4 7.4 V0.7 H13 V7.4" fill="#fff" stroke="#3d3d42" stroke-width="1.3"/><rect x="6.6" y="2" width="4.4" height="4.6" fill="#7fb0e4"/><rect x="7.6" y="3" width="2.4" height="2.6" fill="#5d9be0"/><rect x="0.6" y="7" width="16.2" height="9.4" rx="2.2" fill="#5a5a5f"/><rect x="3" y="11.6" width="11.4" height="2.6" fill="#fff"/></svg>
<svg class="r" style="left:520.00px;top:42.30px" width="16.5" height="18.5" viewBox="0 0 16.5 18.5"><circle cx="7.4" cy="5" r="4.8" fill="#c4c4c4"/><circle cx="7.4" cy="5" r="2.6" fill="none" stroke="#cfcfcf" stroke-width="0.7"/><path d="M0.8 17.6 Q0.8 11 7.4 11 Q9.8 11 11 12 V17.6 Z" fill="#c4c4c4"/><rect x="10" y="11" width="5.8" height="7" fill="#d0d0d0"/><path d="M11 12.6 h4 M11 14.4 h4 M11 16.2 h4" stroke="#bcbcbc" stroke-width="0.7" stroke-dasharray="1.2 0.8"/></svg>
<svg class="r" style="left:583.60px;top:42.00px" width="17" height="18.6" viewBox="0 0 17 18.6"><circle cx="7.4" cy="5.6" r="5.2" fill="#2f7fd6"/><circle cx="7.4" cy="5.6" r="2.7" fill="none" stroke="#4b93e0" stroke-width="0.7"/><path d="M0.6 17.6 Q0.6 11 7.4 11 Q10 11 11 12 V17.6 Z" fill="#2f7fd6"/><rect x="9.8" y="9.8" width="6.2" height="8.2" fill="#e8e8e8" stroke="#7a6a5e" stroke-width="0.9"/><rect x="10.8" y="10.6" width="4.2" height="1.6" fill="#4b8fe0"/><path d="M11.2 13.6 h3.4 M11.2 15 h3.4 M11.2 16.4 h3.4" stroke="#8a8a8a" stroke-width="0.7" stroke-dasharray="0.9 0.5"/></svg>
<svg class="r" style="left:625.50px;top:42.50px" width="20.5" height="17.5" viewBox="0 0 20.5 17.5"><rect x="5.6" y="0.2" width="14.4" height="17" rx="1" fill="#21a366"/><rect x="5.6" y="0.2" width="7.2" height="4.3" fill="#21a366"/><rect x="12.8" y="0.2" width="7.2" height="4.3" fill="#33c481"/><rect x="5.6" y="4.5" width="7.2" height="4.2" fill="#107c41"/><rect x="12.8" y="4.5" width="7.2" height="4.2" fill="#21a366"/><rect x="5.6" y="8.7" width="7.2" height="4.2" fill="#185c37"/><rect x="12.8" y="8.7" width="7.2" height="4.2" fill="#107c41"/><rect x="5.6" y="12.9" width="14.4" height="4.3" fill="#185c37"/><rect x="0.2" y="3.6" width="10.4" height="10.4" rx="0.8" fill="#107c41"/><path d="M2.8 5.8 L8 11.8 M8 5.8 L2.8 11.8" stroke="#fff" stroke-width="1.5"/></svg>
<svg class="r" style="left:675.00px;top:42.50px" width="15.5" height="17.5" viewBox="0 0 15.5 17.5"><path d="M0.7 0.7 H10.4 L14.6 4.9 V16.8 H0.7 Z" fill="#fff" stroke="#3d3d42" stroke-width="1.3"/><path d="M10.4 0.7 V4.9 H14.6" fill="#fff" stroke="#3d3d42" stroke-width="1"/><path d="M1.6 3.4 H9.4 M1.6 5.8 H13.6 M1.6 8.2 H13.6 M1.6 10.6 H13.6 M1.6 13 H13.6 M1.6 15.2 H13.6" stroke="#5d95dc" stroke-width="0.9"/><path d="M4.2 1.4 V16.2" stroke="#5d95dc" stroke-width="0.8"/></svg>
<svg class="r" style="left:716.60px;top:43.60px" width="19" height="15.4" viewBox="0 0 19 15.4"><path d="M0.8 14 V1 H7.2" fill="none" stroke="#f6922e" stroke-width="1.5"/><path d="M0.8 14.6 L5.6 5.8 H13.4 L18 14.6 Z" fill="#f6922e"/><path d="M13.4 5.8 L18 14.6" stroke="#f6922e"/><path d="M7.6 5 Q8.6 1.4 12 1.8 Q15.6 2.4 15.4 7.4" fill="none" stroke="#2f7fd6" stroke-width="2"/><path d="M12.6 7 H18.4 L15.5 10.6 Z" fill="#2f7fd6"/></svg>
<svg class="r" style="left:758.60px;top:42.60px" width="19" height="16.4" viewBox="0 0 19 16.4"><path d="M0.8 15 V2 H6.4" fill="none" stroke="#f6922e" stroke-width="1.5"/><path d="M0.8 15.6 L5.6 7.4 H13.4 L16.4 15.6 Z" fill="#f6922e"/><path d="M16 10.6 V6 Q16 2.4 12.4 2.4 H9.4" fill="none" stroke="#2f7fd6" stroke-width="2"/><path d="M10.4 -0.6 L6.4 2.5 L10.4 5.6 Z" fill="#2f7fd6"/></svg>
<svg class="r" style="left:916.00px;top:42.00px" width="19" height="18" viewBox="0 0 19 18"><path d="M4 14.7 H12.5 V6.9 Q12.5 5.5 13.9 5.5 H17.5 Q17.9 7.7 15.9 7.9 H15.2 V17.2 H4 Q2.6 17.2 2.6 15.95 Q2.6 14.7 4 14.7 Z" fill="none" stroke="#f48a1c" stroke-width="1.25"/><path d="M7.2 10.6 V14.6" stroke="#f48a1c" stroke-width="1.3"/><circle cx="6" cy="5.6" r="4.9" fill="#dcdcdc" stroke="#3d3d42" stroke-width="1.3"/><path d="M4.6 2.8 L6 5.9 L8.6 4.8" fill="none" stroke="#2a62d8" stroke-width="1.3"/></svg>
<svg class="r" style="left:962.00px;top:42.30px" width="13.5" height="17.7" viewBox="0 0 13.5 17.7"><path d="M4.6 3.6 V2.4 Q4.6 0.7 6.4 0.7 H12.6 V13.4 H11.6" fill="none" stroke="#3d3d42" stroke-width="1.3"/><rect x="0.6" y="3.8" width="10.8" height="13.4" rx="1.6" fill="#3f86d8"/><rect x="2" y="5" width="8" height="1.4" fill="#8fbcf0"/><rect x="2" y="7.6" width="8" height="7.6" fill="#2f72c4"/></svg>
<div class="r" style="left:1115.30px;top:41.30px;width:20.40px;height:19.70px;background:#f0f0f0;box-shadow:inset 0 0 0 1px #e4e4e4;"></div>
<svg class="r" style="left:1120.50px;top:46.00px" width="10" height="10" viewBox="0 0 10 10"><circle cx="5" cy="5" r="4.3" fill="none" stroke="#333" stroke-width="0.8"/><path d="M3.6 4 Q3.6 2.6 5 2.6 Q6.5 2.6 6.5 3.9 Q6.5 4.8 5.1 5.3 V6.2" fill="none" stroke="#333" stroke-width="1"/><rect x="4.6" y="6.9" width="1" height="1" fill="#333"/></svg>
<svg class="r" style="left:1157.00px;top:44.00px" width="15.2" height="14.4" viewBox="0 0 15.2 14.4"><rect x="0" y="0" width="15.2" height="14.4" rx="0.8" fill="#d9112b"/><path d="M3 2.6 L12.2 11.8 M12.2 2.6 L3 11.8" stroke="#eef6f3" stroke-width="3.4"/></svg>
<svg class="r" style="left:799.40px;top:41.30px" width="8.6" height="8.6" viewBox="0 0 8.6 8.6"><path d="M1.4 1 H3.8 L4.6 2 H7.6 V7.6 H1.4 Z" fill="#e6e6e6" stroke="#c4c4c4" stroke-width="0.8"/><rect x="4.4" y="4.4" width="2.8" height="2.8" fill="#f6f6f6"/></svg>
<svg class="r" style="left:798.60px;top:56.80px" width="9" height="9.4" viewBox="0 0 9 9.4"><path d="M0.8 5.4 V0.7 H5.2 L7.8 3.3 V8.6 H0.8 V8" fill="#e8e8e8" stroke="#3d3d42" stroke-width="1"/><path d="M5.2 0.7 V3.3 H7.8" fill="none" stroke="#3d3d42" stroke-width="0.8"/><path d="M0.2 6.2 H3.6" stroke="#27a046" stroke-width="1"/><path d="M0.4 7.8 H6" stroke="#2f7fd6" stroke-width="0.9"/></svg>
<svg class="r" style="left:798.20px;top:74.40px" width="9.8" height="7.8" viewBox="0 0 9.8 7.8"><path d="M0.4 1.6 H2.4 L6.6 6.2 H8.2 M0.4 6.2 H2.4 L6.6 1.6 H8.2" fill="none" stroke="#2f7fd6" stroke-width="1.4"/><path d="M7.2 0 L9.6 1.6 L7.2 3.2Z M7.2 4.6 L9.6 6.2 L7.2 7.8Z" fill="#2f7fd6"/></svg>
<svg class="r" style="left:999.30px;top:42.30px" width="8.6" height="8.6" viewBox="0 0 8.6 8.6"><circle cx="4.3" cy="4.3" r="3.7" fill="#e6e6e6" stroke="#c0c0c0" stroke-width="0.9"/><path d="M2.6 1.4 Q5 3 3.6 4.4 Q2.4 5.8 4.6 7.6" fill="none" stroke="#c0c0c0" stroke-width="0.9"/></svg>
<svg class="r" style="left:999.30px;top:57.20px" width="8.8" height="8.6" viewBox="0 0 8.8 8.6"><path d="M0.6 3.6 H2.6 M6 3.6 H8 V8 H0.6 V3.6" fill="#e4e4e4" stroke="#c0c0c0" stroke-width="0.9"/><path d="M4.3 5.6 V0.8 M2.6 2.4 L4.3 0.6 L6 2.4" fill="none" stroke="#c0c0c0" stroke-width="0.9"/></svg>
<svg class="r" style="left:998.80px;top:73.60px" width="9.6" height="8.8" viewBox="0 0 9.6 8.8"><rect x="0.5" y="3.6" width="8.6" height="4.6" fill="#e9f5ea" stroke="#27993f" stroke-width="1"/><circle cx="4.8" cy="5.9" r="1.2" fill="#27993f"/><path d="M2.2 3.4 L4.8 0.4 L7.4 3.4 H5.8 V4.4 H3.8 V3.4Z" fill="#2f7fd6"/></svg>
<svg class="r" style="left:20.00px;top:260.20px" width="3.2" height="4.6" viewBox="0 0 3.2 4.6"><path d="M0.2 0.2 L2.9 2.3 L0.2 4.4 L1 2.3Z" fill="#111"/></svg>
<svg class="r" style="left:32.80px;top:261.10px" width="5.4" height="3.6" viewBox="0 0 5.4 3.6"><path d="M0.4 0.5 L2.7 2.9 L5 0.5" fill="none" stroke="#1a1a1a" stroke-width="1.1"/></svg>
<svg class="r" style="left:44.00px;top:274.19px" width="5.4" height="3.6" viewBox="0 0 5.4 3.6"><path d="M0.4 0.5 L2.7 2.9 L5 0.5" fill="none" stroke="#1a1a1a" stroke-width="1.1"/></svg>
<svg class="r" style="left:42.00px;top:258.50px" width="8.2" height="7.6" viewBox="0 0 8.2 7.6"><path d="M0.5 7 V0.5 H3.2 L4 1.6 H7.6 V3" fill="#fff6ec" stroke="#f28a1e" stroke-width="0.9"/><path d="M1.4 3 H7.7 V7.1 H0.5 Z" fill="#f6922e"/><path d="M2.4 4.6 H6.4" stroke="#fbd0a0" stroke-width="0.8"/></svg>
<svg class="r" style="left:53.00px;top:271.59px" width="8.2" height="7.6" viewBox="0 0 8.2 7.6"><path d="M0.5 7 V0.5 H3.2 L4 1.6 H7.6 V3" fill="#fff6ec" stroke="#f28a1e" stroke-width="0.9"/><path d="M1.4 3 H7.7 V7.1 H0.5 Z" fill="#f6922e"/><path d="M2.4 4.6 H6.4" stroke="#fbd0a0" stroke-width="0.8"/></svg>
<svg class="r" style="left:64.20px;top:284.28px" width="9" height="8.8" viewBox="0 0 9 8.8"><path d="M0.2 1.6 H6.6 L5.8 5 H1.4 Z" fill="#8ec2e6" stroke="#4a88b8" stroke-width="0.6"/><path d="M2 0.9 H5.2 V2.6 H2Z" fill="#25a33c"/><path d="M8.6 0.3 Q7.2 0.6 6.9 2 L6.2 5.8 H1.2" fill="none" stroke="#333" stroke-width="0.8"/><rect x="1.2" y="6.8" width="1.4" height="1.6" fill="#333"/><rect x="5.4" y="6.8" width="1.4" height="1.6" fill="#333"/></svg>
<svg class="r" style="left:64.20px;top:297.37px" width="9" height="8.8" viewBox="0 0 9 8.8"><path d="M0.2 1.6 H6.6 L5.8 5 H1.4 Z" fill="#8ec2e6" stroke="#4a88b8" stroke-width="0.6"/><path d="M2 0.9 H5.2 V2.6 H2Z" fill="#25a33c"/><path d="M8.6 0.3 Q7.2 0.6 6.9 2 L6.2 5.8 H1.2" fill="none" stroke="#333" stroke-width="0.8"/><rect x="1.2" y="6.8" width="1.4" height="1.6" fill="#333"/><rect x="5.4" y="6.8" width="1.4" height="1.6" fill="#333"/></svg>
<svg class="r" style="left:64.20px;top:310.46px" width="9" height="8.8" viewBox="0 0 9 8.8"><path d="M0.2 1.6 H6.6 L5.8 5 H1.4 Z" fill="#8ec2e6" stroke="#4a88b8" stroke-width="0.6"/><path d="M2 0.9 H5.2 V2.6 H2Z" fill="#25a33c"/><path d="M8.6 0.3 Q7.2 0.6 6.9 2 L6.2 5.8 H1.2" fill="none" stroke="#333" stroke-width="0.8"/><rect x="1.2" y="6.8" width="1.4" height="1.6" fill="#333"/><rect x="5.4" y="6.8" width="1.4" height="1.6" fill="#333"/></svg>
<svg class="r" style="left:64.20px;top:323.55px" width="9" height="8.8" viewBox="0 0 9 8.8"><path d="M0.2 1.6 H6.6 L5.8 5 H1.4 Z" fill="#8ec2e6" stroke="#4a88b8" stroke-width="0.6"/><path d="M2 0.9 H5.2 V2.6 H2Z" fill="#25a33c"/><path d="M8.6 0.3 Q7.2 0.6 6.9 2 L6.2 5.8 H1.2" fill="none" stroke="#333" stroke-width="0.8"/><rect x="1.2" y="6.8" width="1.4" height="1.6" fill="#333"/><rect x="5.4" y="6.8" width="1.4" height="1.6" fill="#333"/></svg>
<div class="t" style="left:42.2px;top:334.64px;font-family:'Liberation Serif',serif;font-size:11.5px;line-height:12px;height:12px;color:#1a1a1a">Σ</div>
<div class="t" style="left:42.2px;top:360.82px;font-family:'Liberation Serif',serif;font-size:11.5px;line-height:12px;height:12px;color:#1a1a1a">Σ</div>
<svg class="r" style="left:41.80px;top:349.13px" width="9.2" height="9.4" viewBox="0 0 9.2 9.4"><path d="M0.2 3.4 L4.6 0.2 L9 3.4 Z" fill="#f28a1e"/><rect x="1" y="3.9" width="7.2" height="3.8" fill="#f6a95a"/><rect x="2.6" y="4.2" width="4" height="3.2" fill="#5b8fd6"/><path d="M3.8 4.6 V7 M5.2 4.6 V7" stroke="#dbe8fa" stroke-width="0.6"/><rect x="0.4" y="7.9" width="8.4" height="1.3" fill="#f28a1e"/></svg>
</body></html>
